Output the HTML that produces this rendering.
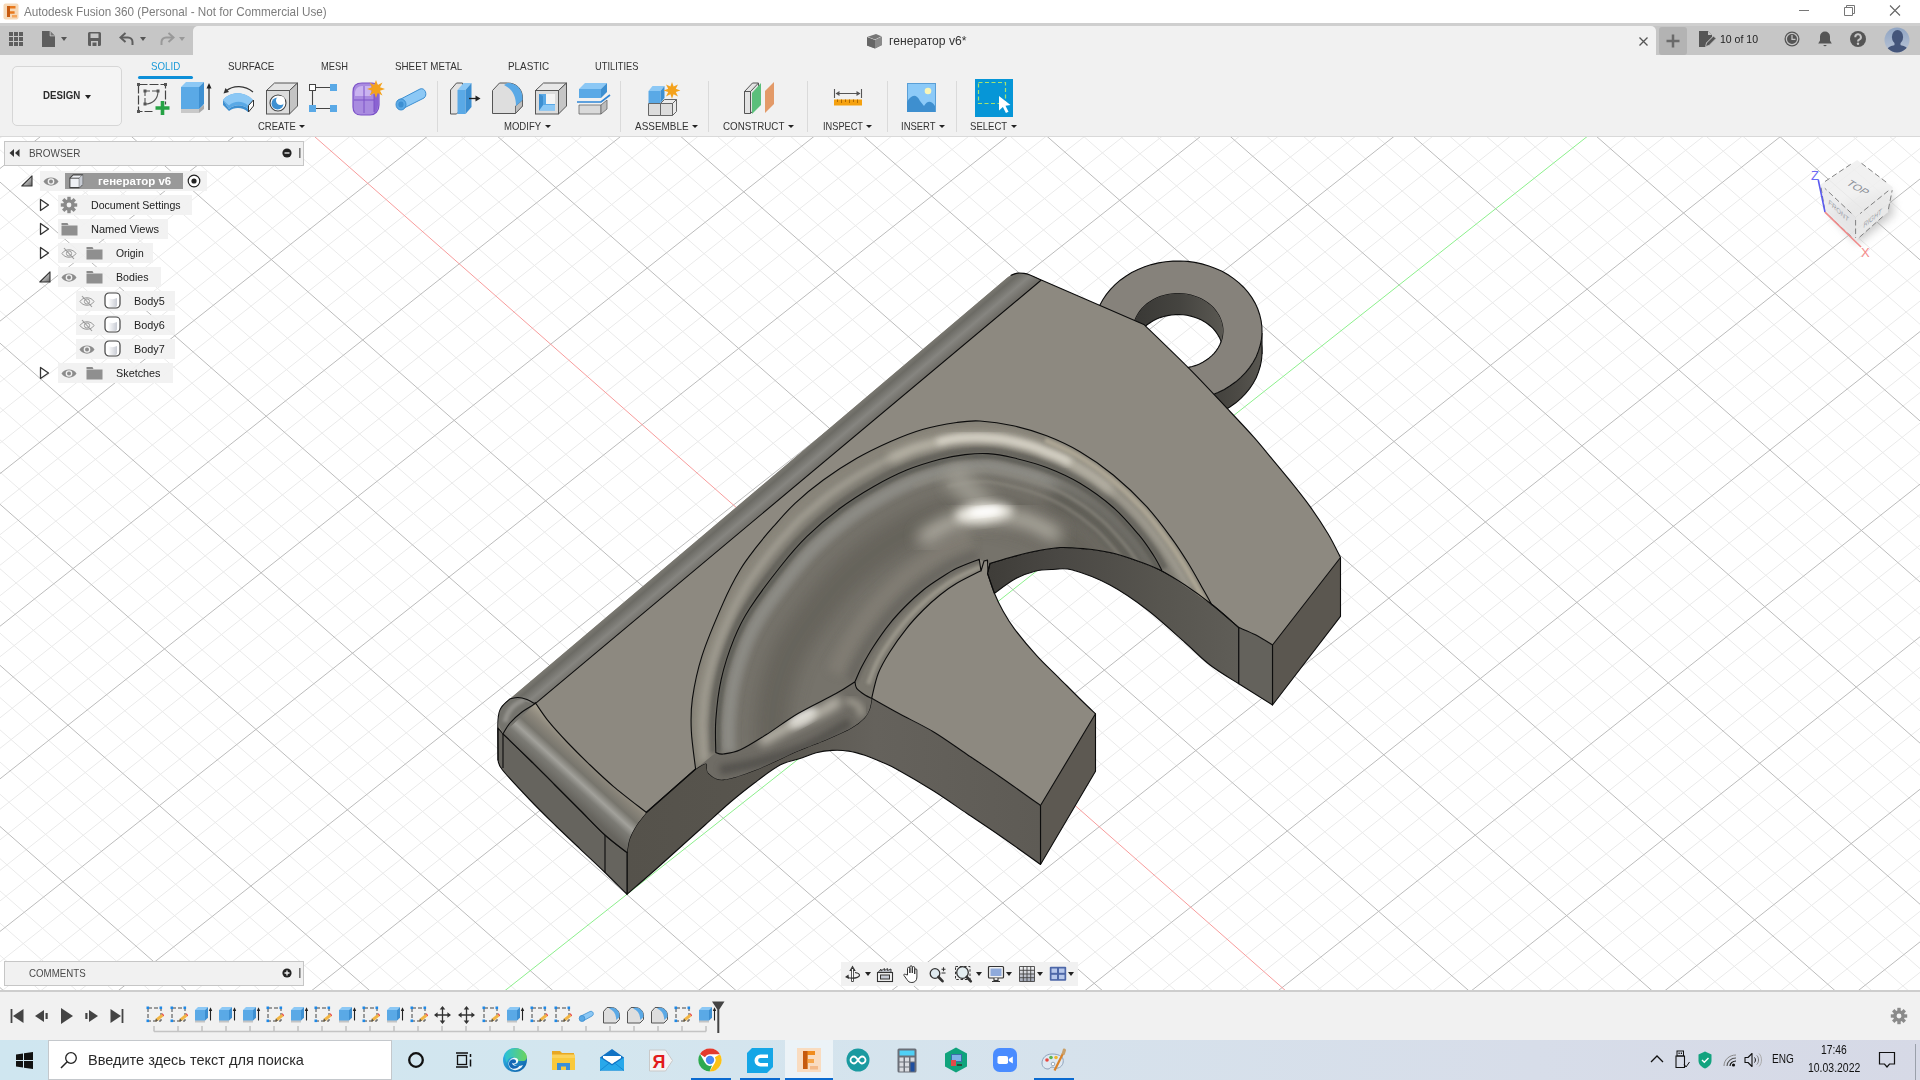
<!DOCTYPE html>
<html><head><meta charset="utf-8"><title>Autodesk Fusion 360</title>
<style>
*{box-sizing:border-box;margin:0;padding:0}
html,body{width:1920px;height:1080px;overflow:hidden;background:#fff}
body{font-family:"Liberation Sans",sans-serif;font-size:12px;color:#333}
#app{position:relative;width:1920px;height:1080px;overflow:hidden;background:#fff}
.abs{position:absolute}
svg{display:block}

</style></head>
<body>
<div id="app">
<svg id="canvas" width="1920" height="853" viewBox="0 137 1920 853" style="position:absolute;left:0;top:137px">
<rect x="0" y="137" width="1920" height="853" fill="#ffffff"/>
<path d="M-2 139.6L3.8 135M-2 200.6L81.1 135M-2 231.1L119.8 135M-2 261.6L158.5 135M-2 292.2L197.1 135M-2 953.6L41.7 992M-2 353.2L274.5 135M-2 921.4L78.3 992M-2 383.7L313.1 135M-2 889.2L114.9 992M-2 414.2L351.8 135M-2 856.9L151.5 992M-2 444.7L390.5 135M-2 792.5L224.8 992M-2 505.8L467.8 135M-2 760.3L261.4 992M-2 536.3L506.5 135M-2 728.1L298.1 992M-2 566.8L545.1 135M-2 695.8L334.7 992M-2 597.3L583.8 135M-2 631.4L408 992M-2 658.3L661.1 135M-2 599.2L444.6 992M-2 688.9L699.8 135M-2 567L481.2 992M-2 719.4L738.4 135M-2 534.7L517.9 992M-2 749.9L777.1 135M-2 470.3L591.1 992M-2 810.9L854.4 135M-2 438.1L627.8 992M-2 841.4L893.1 135M-2 405.8L664.4 992M-2 871.9L931.8 135M-2 373.6L701 992M-2 902.5L970.4 135M-2 309.2L774.3 992M-2 963.5L1047.8 135M-2 277L810.9 992M0.5 992L1086.4 135M-2 244.7L847.6 992M39.2 992L1125.1 135M-2 212.5L884.2 992M77.9 992L1163.8 135M-2 148.1L957.5 992M155.2 992L1241.1 135M19.8 135L994.1 992M193.9 992L1279.8 135M56.4 135L1030.7 992M232.5 992L1318.4 135M93 135L1067.4 992M271.2 992L1357.1 135M166.3 135L1140.6 992M348.5 992L1434.4 135M202.9 135L1177.2 992M387.2 992L1473.1 135M239.6 135L1213.9 992M425.9 992L1511.8 135M276.2 135L1250.5 992M464.5 992L1550.4 135M349.4 135L1323.8 992M541.9 992L1627.8 135M386.1 135L1360.4 992M580.5 992L1666.4 135M422.7 135L1397 992M619.2 992L1705.1 135M459.3 135L1433.7 992M657.9 992L1743.8 135M532.6 135L1506.9 992M735.2 992L1821.1 135M569.2 135L1543.6 992M773.9 992L1859.8 135M605.9 135L1580.2 992M812.5 992L1898.4 135M642.5 135L1616.8 992M851.2 992L1922 146.9M715.8 135L1690.1 992M928.5 992L1922 207.9M752.4 135L1726.7 992M967.2 992L1922 238.5M789 135L1763.4 992M1005.9 992L1922 269M825.7 135L1800 992M1044.5 992L1922 299.5M898.9 135L1873.3 992M1121.9 992L1922 360.5M935.6 135L1909.9 992M1160.5 992L1922 391M972.2 135L1922 970.4M1199.2 992L1922 421.6M1008.8 135L1922 938.2M1237.9 992L1922 452.1M1082.1 135L1922 873.8M1315.2 992L1922 513.1M1118.7 135L1922 841.5M1353.9 992L1922 543.6M1155.4 135L1922 809.3M1392.5 992L1922 574.1M1192 135L1922 777.1M1431.2 992L1922 604.6M1265.3 135L1922 712.7M1508.5 992L1922 665.7M1301.9 135L1922 680.4M1547.2 992L1922 696.2M1338.5 135L1922 648.2M1585.8 992L1922 726.7M1375.1 135L1922 616M1624.5 992L1922 757.2M1448.4 135L1922 551.6M1701.8 992L1922 818.3M1485 135L1922 519.3M1740.5 992L1922 848.8M1521.7 135L1922 487.1M1779.2 992L1922 879.3M1558.3 135L1922 454.9M1817.8 992L1922 909.8M1631.6 135L1922 390.5M1895.2 992L1922 970.8M1668.2 135L1922 358.2M1704.8 135L1922 326M1741.5 135L1922 293.8M1814.7 135L1922 229.3M1851.4 135L1922 197.1M1888 135L1922 164.9" stroke="#eaeaea" stroke-width="1" fill="none"/>
<path d="M-2 170.1L42.5 135M-2 985.8L5 992M-2 322.7L235.8 135M-2 824.7L188.2 992M-2 475.2L429.1 135M-2 663.6L371.3 992M-2 627.8L622.5 135M-2 502.5L554.5 992M-2 780.4L815.8 135M-2 341.4L737.7 992M-2 933L1009.1 135M-2 180.3L920.8 992M116.5 992L1202.4 135M129.7 135L1104 992M309.9 992L1395.8 135M496 135L1470.3 992M696.5 992L1782.4 135M679.1 135L1653.5 992M889.9 992L1922 177.4M862.3 135L1836.6 992M1083.2 992L1922 330M1045.5 135L1922 906M1276.5 992L1922 482.6M1228.6 135L1922 744.9M1469.8 992L1922 635.2M1411.8 135L1922 583.8M1663.2 992L1922 787.7M1594.9 135L1922 422.7M1856.5 992L1922 940.3M1778.1 135L1922 261.6" stroke="#bcbcbc" stroke-width="1" fill="none"/>
<path d="M312.8 135L1287.1 992" stroke="#f89c9c" stroke-width="1" fill="none"/>
<path d="M503.2 992L1589.1 135" stroke="#8cf08c" stroke-width="1" fill="none"/>
<defs>
<linearGradient id="gFil" gradientUnits="userSpaceOnUse" x1="758" y1="488.5" x2="786" y2="521.5"><stop offset="0" stop-color="#7b7972"/><stop offset=".12" stop-color="#6c6b65"/><stop offset=".32" stop-color="#868580"/><stop offset=".52" stop-color="#706e68"/><stop offset=".74" stop-color="#827e74"/><stop offset=".9" stop-color="#908b7f"/><stop offset="1" stop-color="#88847b"/></linearGradient>
<linearGradient id="gEndFil" gradientUnits="userSpaceOnUse" x1="592" y1="757" x2="562" y2="790"><stop offset="0" stop-color="#a39d8e"/><stop offset=".2" stop-color="#8b867b"/><stop offset=".42" stop-color="#77756d"/><stop offset=".6" stop-color="#a2a19b"/><stop offset=".75" stop-color="#7b7a74"/><stop offset="1" stop-color="#66645e"/></linearGradient>
<linearGradient id="gFront" gradientUnits="userSpaceOnUse" x1="627" y1="0" x2="1040" y2="0"><stop offset="0" stop-color="#55524b"/><stop offset=".35" stop-color="#58554e"/><stop offset=".6" stop-color="#65625c"/><stop offset="1" stop-color="#5e5b55"/></linearGradient>
<linearGradient id="gCut" gradientUnits="userSpaceOnUse" x1="990" y1="0" x2="1272" y2="0"><stop offset="0" stop-color="#3f3d39"/><stop offset=".25" stop-color="#4a4844"/><stop offset=".6" stop-color="#57554f"/><stop offset=".88" stop-color="#5f5d57"/><stop offset="1" stop-color="#64625c"/></linearGradient>
<linearGradient id="gRingOut" gradientUnits="userSpaceOnUse" x1="1200" y1="0" x2="1263" y2="0"><stop offset="0" stop-color="#3d3c38"/><stop offset=".6" stop-color="#4c4a45"/><stop offset="1" stop-color="#5a5852"/></linearGradient>
<linearGradient id="gRingIn" gradientUnits="userSpaceOnUse" x1="1137" y1="0" x2="1223" y2="0"><stop offset="0" stop-color="#3a3936"/><stop offset=".5" stop-color="#454440"/><stop offset="1" stop-color="#5a5852"/></linearGradient>
<linearGradient id="gTrough" gradientUnits="userSpaceOnUse" x1="760" y1="560" x2="870" y2="650"><stop offset="0" stop-color="#6b6962"/><stop offset=".25" stop-color="#7e7c75"/><stop offset=".5" stop-color="#716e66"/><stop offset=".8" stop-color="#7a766c"/><stop offset="1" stop-color="#8a867b"/></linearGradient>
<filter id="b3" x="-20%" y="-20%" width="140%" height="140%"><feGaussianBlur stdDeviation="3"/></filter>
<filter id="b5" x="-30%" y="-30%" width="160%" height="160%"><feGaussianBlur stdDeviation="5"/></filter>
<filter id="b8" x="-40%" y="-40%" width="180%" height="180%"><feGaussianBlur stdDeviation="8"/></filter>
<filter id="b2" x="-20%" y="-20%" width="140%" height="140%"><feGaussianBlur stdDeviation="1.6"/></filter>
</defs>
<mask id="mRing" maskUnits="userSpaceOnUse" x="1080" y="240" width="200" height="200"><rect x="1080" y="240" width="200" height="200" fill="#fff"/><path d="M1235.8 381.8L1240.9 377.4L1245.5 372.7L1249.6 367.6L1253.2 362.3L1256.2 356.7L1258.5 350.9L1260.3 345L1261.5 339L1262 332.9L1261.9 326.8L1261.1 320.7L1259.7 314.7L1257.7 308.8L1255.1 303.1L1251.9 297.6L1248.1 292.4L1243.8 287.5L1239 282.8L1233.7 278.6L1228.1 274.8L1222 271.3L1215.6 268.4L1208.9 265.9L1201.9 263.9L1194.8 262.4L1187.6 261.4L1180.3 261L1173 261.1L1165.7 261.7L1158.5 262.9L1151.4 264.6L1144.6 266.8L1138 269.4L1131.7 272.6L1125.8 276.2L1120.2 280.2L1115.1 284.6L1110.5 289.3L1106.4 294.4L1102.8 299.7L1099.8 305.3L1097.5 311.1L1095.7 317L1094.5 323L1094 329.1L1094.1 335.2L1094.9 341.3L1096.3 347.3L1098.3 353.2L1100.9 358.9L1104.1 364.4L1107.9 369.6L1112.2 374.5L1117 379.2L1122.3 383.4L1127.9 387.2L1134 390.7L1140.4 393.6L1147.1 396.1L1154.1 398.1L1161.2 399.6L1168.4 400.6L1175.7 401L1183 400.9L1190.3 400.3L1197.5 399.1L1204.6 397.4L1211.4 395.2L1218 392.6L1224.3 389.4L1230.2 385.8L1235.8 381.8Z" fill="#000"/></mask>
<g mask="url(#mRing)"><path d="M1235.8 402.8L1240.9 398.4L1245.5 393.7L1249.6 388.6L1253.2 383.3L1256.2 377.7L1258.5 371.9L1260.3 366L1261.5 360L1262 353.9L1261.9 347.8L1261.1 341.7L1259.7 335.7L1257.7 329.8L1255.1 324.1L1251.9 318.6L1248.1 313.4L1243.8 308.5L1239 303.8L1233.7 299.6L1228.1 295.8L1222 292.3L1215.6 289.4L1208.9 286.9L1201.9 284.9L1194.8 283.4L1187.6 282.4L1180.3 282L1173 282.1L1165.7 282.7L1158.5 283.9L1151.4 285.6L1144.6 287.8L1138 290.4L1131.7 293.6L1125.8 297.2L1120.2 301.2L1115.1 305.6L1110.5 310.3L1106.4 315.4L1102.8 320.7L1099.8 326.3L1097.5 332.1L1095.7 338L1094.5 344L1094 350.1L1094.1 356.2L1094.9 362.3L1096.3 368.3L1098.3 374.2L1100.9 379.9L1104.1 385.4L1107.9 390.6L1112.2 395.5L1117 400.2L1122.3 404.4L1127.9 408.2L1134 411.7L1140.4 414.6L1147.1 417.1L1154.1 419.1L1161.2 420.6L1168.4 421.6L1175.7 422L1183 421.9L1190.3 421.3L1197.5 420.1L1204.6 418.4L1211.4 416.2L1218 413.6L1224.3 410.4L1230.2 406.8L1235.8 402.8Z" fill="url(#gRingOut)" stroke="#0c0c0c" stroke-width="1.1"/>
<path d="M1094 329.1L1262 332.9L1262 353.9L1094 350.1Z" fill="url(#gRingOut)"/>
<path d="M1262 332.9L1262 353.9" stroke="#0c0c0c" stroke-width="1.1"/></g>
<path d="M1235.8 381.8L1240.9 377.4L1245.5 372.7L1249.6 367.6L1253.2 362.3L1256.2 356.7L1258.5 350.9L1260.3 345L1261.5 339L1262 332.9L1261.9 326.8L1261.1 320.7L1259.7 314.7L1257.7 308.8L1255.1 303.1L1251.9 297.6L1248.1 292.4L1243.8 287.5L1239 282.8L1233.7 278.6L1228.1 274.8L1222 271.3L1215.6 268.4L1208.9 265.9L1201.9 263.9L1194.8 262.4L1187.6 261.4L1180.3 261L1173 261.1L1165.7 261.7L1158.5 262.9L1151.4 264.6L1144.6 266.8L1138 269.4L1131.7 272.6L1125.8 276.2L1120.2 280.2L1115.1 284.6L1110.5 289.3L1106.4 294.4L1102.8 299.7L1099.8 305.3L1097.5 311.1L1095.7 317L1094.5 323L1094 329.1L1094.1 335.2L1094.9 341.3L1096.3 347.3L1098.3 353.2L1100.9 358.9L1104.1 364.4L1107.9 369.6L1112.2 374.5L1117 379.2L1122.3 383.4L1127.9 387.2L1134 390.7L1140.4 393.6L1147.1 396.1L1154.1 398.1L1161.2 399.6L1168.4 400.6L1175.7 401L1183 400.9L1190.3 400.3L1197.5 399.1L1204.6 397.4L1211.4 395.2L1218 392.6L1224.3 389.4L1230.2 385.8L1235.8 381.8ZM1208.9 358.2L1211.6 355.8L1214.1 353.3L1216.3 350.6L1218.2 347.7L1219.8 344.8L1221.1 341.7L1222 338.5L1222.6 335.3L1222.9 332L1222.9 328.7L1222.5 325.5L1221.7 322.3L1220.6 319.1L1219.2 316.1L1217.5 313.2L1215.5 310.4L1213.2 307.7L1210.6 305.2L1207.8 303L1204.8 300.9L1201.5 299.1L1198.1 297.5L1194.5 296.2L1190.8 295.1L1187 294.3L1183.1 293.8L1179.2 293.6L1175.3 293.6L1171.4 294L1167.6 294.6L1163.8 295.5L1160.1 296.6L1156.6 298.1L1153.2 299.8L1150.1 301.7L1147.1 303.8L1144.4 306.2L1141.9 308.7L1139.7 311.4L1137.8 314.3L1136.2 317.2L1134.9 320.3L1134 323.5L1133.4 326.7L1133.1 330L1133.1 333.3L1133.5 336.5L1134.3 339.7L1135.4 342.9L1136.8 345.9L1138.5 348.8L1140.5 351.6L1142.8 354.3L1145.4 356.8L1148.2 359L1151.2 361.1L1154.5 362.9L1157.9 364.5L1161.5 365.8L1165.2 366.9L1169 367.7L1172.9 368.2L1176.8 368.4L1180.7 368.4L1184.6 368L1188.4 367.4L1192.2 366.5L1195.9 365.4L1199.4 363.9L1202.8 362.2L1205.9 360.3L1208.9 358.2Z" fill="#86827b" fill-rule="evenodd" stroke="#0c0c0c" stroke-width="1.1"/>
<clipPath id="cpHole"><path d="M1208.9 358.2L1211.6 355.8L1214.1 353.3L1216.3 350.6L1218.2 347.7L1219.8 344.8L1221.1 341.7L1222 338.5L1222.6 335.3L1222.9 332L1222.9 328.7L1222.5 325.5L1221.7 322.3L1220.6 319.1L1219.2 316.1L1217.5 313.2L1215.5 310.4L1213.2 307.7L1210.6 305.2L1207.8 303L1204.8 300.9L1201.5 299.1L1198.1 297.5L1194.5 296.2L1190.8 295.1L1187 294.3L1183.1 293.8L1179.2 293.6L1175.3 293.6L1171.4 294L1167.6 294.6L1163.8 295.5L1160.1 296.6L1156.6 298.1L1153.2 299.8L1150.1 301.7L1147.1 303.8L1144.4 306.2L1141.9 308.7L1139.7 311.4L1137.8 314.3L1136.2 317.2L1134.9 320.3L1134 323.5L1133.4 326.7L1133.1 330L1133.1 333.3L1133.5 336.5L1134.3 339.7L1135.4 342.9L1136.8 345.9L1138.5 348.8L1140.5 351.6L1142.8 354.3L1145.4 356.8L1148.2 359L1151.2 361.1L1154.5 362.9L1157.9 364.5L1161.5 365.8L1165.2 366.9L1169 367.7L1172.9 368.2L1176.8 368.4L1180.7 368.4L1184.6 368L1188.4 367.4L1192.2 366.5L1195.9 365.4L1199.4 363.9L1202.8 362.2L1205.9 360.3L1208.9 358.2Z"/></clipPath>
<g clip-path="url(#cpHole)"><path d="M1100 250H1260V420H1100ZM1208.9 379.2L1211.6 376.8L1214.1 374.3L1216.3 371.6L1218.2 368.7L1219.8 365.8L1221.1 362.7L1222 359.5L1222.6 356.3L1222.9 353L1222.9 349.7L1222.5 346.5L1221.7 343.3L1220.6 340.1L1219.2 337.1L1217.5 334.2L1215.5 331.4L1213.2 328.7L1210.6 326.2L1207.8 324L1204.8 321.9L1201.5 320.1L1198.1 318.5L1194.5 317.2L1190.8 316.1L1187 315.3L1183.1 314.8L1179.2 314.6L1175.3 314.6L1171.4 315L1167.6 315.6L1163.8 316.5L1160.1 317.6L1156.6 319.1L1153.2 320.8L1150.1 322.7L1147.1 324.8L1144.4 327.2L1141.9 329.7L1139.7 332.4L1137.8 335.3L1136.2 338.2L1134.9 341.3L1134 344.5L1133.4 347.7L1133.1 351L1133.1 354.3L1133.5 357.5L1134.3 360.7L1135.4 363.9L1136.8 366.9L1138.5 369.8L1140.5 372.6L1142.8 375.3L1145.4 377.8L1148.2 380L1151.2 382.1L1154.5 383.9L1157.9 385.5L1161.5 386.8L1165.2 387.9L1169 388.7L1172.9 389.2L1176.8 389.4L1180.7 389.4L1184.6 389L1188.4 388.4L1192.2 387.5L1195.9 386.4L1199.4 384.9L1202.8 383.2L1205.9 381.3L1208.9 379.2Z" fill="url(#gRingIn)" fill-rule="evenodd"/><path d="M1208.9 379.2L1211.6 376.8L1214.1 374.3L1216.3 371.6L1218.2 368.7L1219.8 365.8L1221.1 362.7L1222 359.5L1222.6 356.3L1222.9 353L1222.9 349.7L1222.5 346.5L1221.7 343.3L1220.6 340.1L1219.2 337.1L1217.5 334.2L1215.5 331.4L1213.2 328.7L1210.6 326.2L1207.8 324L1204.8 321.9L1201.5 320.1L1198.1 318.5L1194.5 317.2L1190.8 316.1L1187 315.3L1183.1 314.8L1179.2 314.6L1175.3 314.6L1171.4 315L1167.6 315.6L1163.8 316.5L1160.1 317.6L1156.6 319.1L1153.2 320.8L1150.1 322.7L1147.1 324.8L1144.4 327.2L1141.9 329.7L1139.7 332.4L1137.8 335.3L1136.2 338.2L1134.9 341.3L1134 344.5L1133.4 347.7L1133.1 351L1133.1 354.3L1133.5 357.5L1134.3 360.7L1135.4 363.9L1136.8 366.9L1138.5 369.8L1140.5 372.6L1142.8 375.3L1145.4 377.8L1148.2 380L1151.2 382.1L1154.5 383.9L1157.9 385.5L1161.5 386.8L1165.2 387.9L1169 388.7L1172.9 389.2L1176.8 389.4L1180.7 389.4L1184.6 389L1188.4 388.4L1192.2 387.5L1195.9 386.4L1199.4 384.9L1202.8 383.2L1205.9 381.3L1208.9 379.2Z" fill="none" stroke="#0c0c0c" stroke-width="1.1"/></g>
<path d="M510 698.8L1006.9 278.1C1007.6 277.6 1009.2 276 1011 275.2C1012.8 274.4 1015.3 273.4 1017.5 273.1C1019.7 272.8 1021.9 273.1 1024 273.4C1026.1 273.7 1027.1 273.9 1030 275C1032.9 276.1 1039.4 279.2 1041.3 280L1143.8 324.4C1151.5 331.9 1175.6 354.9 1190 369.4C1204.4 383.9 1219.3 400.2 1230 411.5C1240.7 422.8 1246.9 429.4 1254 437.4C1261.1 445.4 1266.4 452.2 1272.6 459.6C1278.8 467 1284.8 474.2 1291 481.9C1297.2 489.6 1303.4 497.3 1309.6 505.9C1315.8 514.5 1322.8 525.1 1328 533.7C1333.2 542.3 1338.4 553.5 1340.5 557.5L1272.5 645C1269.8 643.3 1261.6 637.9 1256 635C1250.4 632.1 1241.7 628.8 1238.8 627.5C1234.4 623.8 1221.5 612.1 1212.5 605C1203.5 597.9 1193.8 590.8 1185 585C1176.2 579.2 1168.3 574.2 1160 570C1151.7 565.8 1143.3 562.9 1135 560C1126.7 557.1 1118.3 554.4 1110 552.5C1101.7 550.6 1093.3 549.6 1085 548.8C1076.7 548 1068.3 547.1 1060 547.5C1051.7 547.9 1043.3 549.6 1035 551.3C1026.7 553 1017.5 555.5 1010 557.5C1002.5 559.5 993.3 562.3 990 563.3L987.5 573.3C988.6 576.6 991.8 587 994.4 593.3C997 599.6 999.7 605.1 1003 611C1006.3 616.9 1008.8 621.5 1014.4 628.9C1020 636.3 1029.3 647.5 1036.7 655.6C1044.1 663.8 1051.5 670.4 1058.9 677.8C1066.3 685.2 1075 694 1081.1 700C1087.2 706 1093.1 711.5 1095.5 713.8L1040.5 805.5C1033.8 800.7 1012.3 785.2 1000 776.7C987.7 768.2 977.8 761.7 966.7 754.2C955.6 746.7 944.7 738.5 933.3 731.7C921.9 724.9 908.8 718.9 898.5 713.3C888.2 707.7 876.2 700.8 871.7 698.3C871.4 700.1 870.8 705.6 869.6 708.9C868.4 712.1 867.5 714.6 864.4 717.8C861.3 721 857.5 724.5 851.1 728.1C844.7 731.8 834.8 735.9 825.9 739.7C817 743.5 809.8 745.8 798 750.8C786.2 755.8 767.8 765.2 755.3 770C742.8 774.8 731.1 779.1 723.3 779.6C715.5 780.1 711.2 775.7 708.4 773C705.5 770.3 708.3 764.3 706.2 763.6C704.1 762.9 697.4 768.1 695.6 769L646.3 812.5L627 852.5C623.3 849.6 612.8 842.1 605 835C597.2 827.9 588.3 818.3 580 810C571.7 801.7 563.3 793.3 555 785C546.7 776.7 538.7 768.5 530 760C521.3 751.5 507.5 738.2 503 733.8L498 728C498.6 717.9 499.3 711 501.3 707.5C503.3 704 508.6 700.2 510 698.8Z" fill="#8d8980"/>
<path d="M1340.5 557.5L1340.5 616.3L1272.5 705L1272.5 645Z" fill="#5b5750" stroke="#0c0c0c" stroke-width="1.1" stroke-linejoin="round"/>
<path d="M990 563.3C993.3 562.3 1002.5 559.5 1010 557.5C1017.5 555.5 1026.7 553 1035 551.3C1043.3 549.6 1051.7 547.9 1060 547.5C1068.3 547.1 1076.7 548 1085 548.8C1093.3 549.6 1101.7 550.6 1110 552.5C1118.3 554.4 1126.7 557.1 1135 560C1143.3 562.9 1151.7 565.8 1160 570C1168.3 574.2 1176.2 579.2 1185 585C1193.8 590.8 1203.5 597.9 1212.5 605C1221.5 612.1 1234.4 623.8 1238.8 627.5L1238.8 683.8C1234 680.7 1219 671.9 1210 665C1201 658.1 1195.4 651.7 1185 642.5C1174.6 633.3 1160 619.6 1147.5 610C1135 600.4 1122.5 591.7 1110 585C1097.5 578.3 1082 572.6 1072.5 570C1063 567.4 1059.2 569.3 1053 569.5C1046.8 569.7 1041.3 569.7 1035 571.3C1028.7 572.9 1021.8 575.3 1015 579C1008.2 582.7 997.8 590.9 994.4 593.3L987.5 573.3Z" fill="url(#gCut)" stroke="#0c0c0c" stroke-width="1.1" stroke-linejoin="round"/>
<path d="M1238.8 627.5C1241.7 628.8 1250.4 632.1 1256 635C1261.6 637.9 1269.8 643.3 1272.5 645L1272.5 705L1238.8 683.8Z" fill="#64625c" stroke="#0c0c0c" stroke-width="1.1" stroke-linejoin="round"/>
<path d="M1095.5 713.8L1095.5 771.3L1040.5 864.5L1040.5 805.5Z" fill="#5d5952" stroke="#0c0c0c" stroke-width="1.1" stroke-linejoin="round"/>
<path d="M627 894.3L627 852.5C627.4 850.2 628 843.4 629.5 839C631 834.6 633.2 830.4 636 826C638.8 821.6 644.6 814.8 646.3 812.5L695.6 769C697.4 768.1 704.1 762.9 706.2 763.6C708.3 764.3 705.5 770.3 708.4 773C711.2 775.7 715.5 780.1 723.3 779.6C731.1 779.1 742.8 774.8 755.3 770C767.8 765.2 786.2 755.8 798 750.8C809.8 745.8 817 743.5 825.9 739.7C834.8 735.9 844.7 731.8 851.1 728.1C857.5 724.5 861.3 721 864.4 717.8C867.5 714.6 868.4 712.1 869.6 708.9C870.8 705.6 871.4 700.1 871.7 698.3C876.2 700.8 888.2 707.7 898.5 713.3C908.8 718.9 921.9 724.9 933.3 731.7C944.7 738.5 955.6 746.7 966.7 754.2C977.8 761.7 987.7 768.2 1000 776.7C1012.3 785.2 1033.8 800.7 1040.5 805.5L1040.5 864.5C1033.8 859.7 1012.3 844.3 1000 835.8C987.7 827.3 977.8 820.8 966.7 813.3C955.6 805.8 944.9 798.1 933.3 790.8C921.7 783.5 905.9 774.3 897.2 769.5C888.5 764.7 886.4 764.2 881 761.8C875.6 759.4 870.2 757.1 864.8 755.3C859.4 753.5 854 751.9 848.6 751.1C843.2 750.3 837.8 750.1 832.4 750.4C827 750.7 821.6 751.4 816.2 752.7C810.8 754.1 806 756.5 800 758.5C794 760.5 787.5 761 780 765C772.5 769 763.3 776.2 755 782.5C746.7 788.8 738.3 795.4 730 802.5C721.7 809.6 713.3 817.5 705 825C696.7 832.5 688.3 840 680 847.5C671.7 855 663.8 862.2 655 870C646.2 877.8 631.7 890.2 627 894.3Z" fill="url(#gFront)" stroke="#0c0c0c" stroke-width="1.1" stroke-linejoin="round"/>
<path d="M503 733.8C507.5 738.2 521.3 751.5 530 760C538.7 768.5 546.7 776.7 555 785C563.3 793.3 571.7 801.7 580 810C588.3 818.3 597.2 827.9 605 835C612.8 842.1 623.3 849.6 627 852.5L627 894.3C623.3 890.7 612.8 880.1 605 872.5C597.2 864.9 588.3 856.7 580 848.8C571.7 840.9 563.3 833.1 555 825C546.7 816.9 538.8 809.2 530 800C521.2 790.8 507.8 776.7 502.5 770C497.2 763.3 498.8 761.7 498 760L498 728Z" fill="#66645e" stroke="#0c0c0c" stroke-width="1.1" stroke-linejoin="round"/>
<path d="M605 835V872.5M503 733.8V768" stroke="#0c0c0c" stroke-width="1.1"/>
<path d="M510 698.8L1006.9 278.1C1007.6 277.6 1009.2 276 1011 275.2C1012.8 274.4 1015.3 273.4 1017.5 273.1C1019.7 272.8 1021.9 273.1 1024 273.4C1026.1 273.7 1027.1 273.9 1030 275C1032.9 276.1 1039.4 279.2 1041.3 280L535 703.8Z" fill="url(#gFil)"/>
<path d="M535.2 702.5C537.5 705.7 543.4 715 548.8 721.7C554.2 728.4 560.9 735.6 567.5 742.5C574.1 749.4 580.7 756 588.3 763.3C595.9 770.6 603.6 778.1 613.3 786.3C623 794.5 640.8 808.1 646.3 812.5C644.6 814.8 638.8 821.6 636 826C633.2 830.4 631 834.6 629.5 839C628 843.4 627.4 850.2 627 852.5C623.3 849.6 612.8 842.1 605 835C597.2 827.9 588.3 818.3 580 810C571.7 801.7 563.3 793.3 555 785C546.7 776.7 538.7 768.5 530 760C521.3 751.5 507.5 738.2 503 733.8Z" fill="url(#gEndFil)"/>
<path d="M503 733.8C502.2 731.8 498.8 726.4 498.5 722C498.2 717.6 499.4 711.4 501.3 707.5C503.2 703.6 508.6 700.2 510 698.8L535 703.8Z" fill="#74736d"/>
<path d="M505 722Q508 706 524 700" stroke="#9b9a94" stroke-width="5" fill="none" filter="url(#b2)" opacity=".8"/>
<clipPath id="cpLip"><path d="M695.6 769C694.9 762.6 691.8 742.3 691.3 730.6C690.8 718.9 690.6 711.1 692.4 698.6C694.2 686.1 696.9 671.9 702 655.9C707.1 639.9 717 616.9 723.3 602.6C729.6 588.3 734.4 579.3 740 570C745.6 560.7 751.2 553.9 756.7 546.7C762.2 539.5 766.9 533.9 773.3 526.7C779.7 519.5 786.7 511.1 795 503.3C803.3 495.5 813 487.5 823.3 480C833.6 472.5 845.6 464.7 856.7 458.3C867.8 451.9 878.9 446.6 890 441.7C901.1 436.8 912.2 432.4 923.3 429.2C934.4 426 947.2 423.9 956.7 422.5C966.2 421.1 970.6 420.4 980 421C989.4 421.6 1002.2 423.3 1013.3 425.8C1024.4 428.3 1035.6 431.5 1046.7 435.8C1057.8 440.1 1068.9 445.2 1080 451.7C1091.1 458.2 1102.2 465.8 1113.3 475C1124.4 484.2 1137 496.1 1146.7 506.7C1156.4 517.2 1164.8 528.9 1171.7 538.3C1178.6 547.7 1183.3 555.2 1188.3 563.3C1193.3 571.4 1197.8 579.8 1201.7 586.7C1205.7 593.7 1210.3 602 1212 605L1161.7 570C1160.3 567.5 1157.2 561 1153.3 555C1149.4 549 1145 542.1 1138.3 534.2C1131.6 526.3 1123 516 1113.3 507.5C1103.6 499 1091.1 490 1080 483.3C1068.9 476.6 1057.8 471.8 1046.7 467.5C1035.6 463.2 1023.1 460.1 1013.3 457.8C1003.5 455.5 996 454.1 988 453.6C980 453.1 973 453.7 965 454.6C957 455.5 949.7 456.6 940 459.2C930.3 461.8 917.8 465.4 906.7 470C895.6 474.6 884.4 480.3 873.3 486.7C862.2 493.1 851.1 500 840 508.3C828.9 516.6 816.4 527.2 806.7 536.7C797 546.2 791.2 553.1 781.7 565C772.2 576.9 758 595.7 750 608C742 620.3 738.8 627 734 638.9C729.2 650.8 724.2 665.9 721.2 679.4C718.2 692.9 716.7 707.7 715.8 719.9C714.9 732.1 715.8 747.1 715.8 752.5Z"/></clipPath>
<path d="M695.6 769C694.9 762.6 691.8 742.3 691.3 730.6C690.8 718.9 690.6 711.1 692.4 698.6C694.2 686.1 696.9 671.9 702 655.9C707.1 639.9 717 616.9 723.3 602.6C729.6 588.3 734.4 579.3 740 570C745.6 560.7 751.2 553.9 756.7 546.7C762.2 539.5 766.9 533.9 773.3 526.7C779.7 519.5 786.7 511.1 795 503.3C803.3 495.5 813 487.5 823.3 480C833.6 472.5 845.6 464.7 856.7 458.3C867.8 451.9 878.9 446.6 890 441.7C901.1 436.8 912.2 432.4 923.3 429.2C934.4 426 947.2 423.9 956.7 422.5C966.2 421.1 970.6 420.4 980 421C989.4 421.6 1002.2 423.3 1013.3 425.8C1024.4 428.3 1035.6 431.5 1046.7 435.8C1057.8 440.1 1068.9 445.2 1080 451.7C1091.1 458.2 1102.2 465.8 1113.3 475C1124.4 484.2 1137 496.1 1146.7 506.7C1156.4 517.2 1164.8 528.9 1171.7 538.3C1178.6 547.7 1183.3 555.2 1188.3 563.3C1193.3 571.4 1197.8 579.8 1201.7 586.7C1205.7 593.7 1210.3 602 1212 605L1161.7 570C1160.3 567.5 1157.2 561 1153.3 555C1149.4 549 1145 542.1 1138.3 534.2C1131.6 526.3 1123 516 1113.3 507.5C1103.6 499 1091.1 490 1080 483.3C1068.9 476.6 1057.8 471.8 1046.7 467.5C1035.6 463.2 1023.1 460.1 1013.3 457.8C1003.5 455.5 996 454.1 988 453.6C980 453.1 973 453.7 965 454.6C957 455.5 949.7 456.6 940 459.2C930.3 461.8 917.8 465.4 906.7 470C895.6 474.6 884.4 480.3 873.3 486.7C862.2 493.1 851.1 500 840 508.3C828.9 516.6 816.4 527.2 806.7 536.7C797 546.2 791.2 553.1 781.7 565C772.2 576.9 758 595.7 750 608C742 620.3 738.8 627 734 638.9C729.2 650.8 724.2 665.9 721.2 679.4C718.2 692.9 716.7 707.7 715.8 719.9C714.9 732.1 715.8 747.1 715.8 752.5Z" fill="#7d7a71"/>
<clipPath id="cpTr"><path d="M715.8 752.5C715.8 747.1 714.9 732.1 715.8 719.9C716.7 707.7 718.2 692.9 721.2 679.4C724.2 665.9 729.2 650.8 734 638.9C738.8 627 742 620.3 750 608C758 595.7 772.2 576.9 781.7 565C791.2 553.1 797 546.2 806.7 536.7C816.4 527.2 828.9 516.6 840 508.3C851.1 500 862.2 493.1 873.3 486.7C884.4 480.3 895.6 474.6 906.7 470C917.8 465.4 930.3 461.8 940 459.2C949.7 456.6 957 455.5 965 454.6C973 453.7 980 453.1 988 453.6C996 454.1 1003.5 455.5 1013.3 457.8C1023.1 460.1 1035.6 463.2 1046.7 467.5C1057.8 471.8 1068.9 476.6 1080 483.3C1091.1 490 1103.6 499 1113.3 507.5C1123 516 1131.6 526.3 1138.3 534.2C1145 542.1 1149.4 549 1153.3 555C1157.2 561 1160.3 567.5 1161.7 570L1160 570L1135 560L1110 552.5L1085 548.8L1060 547.5L1035 551.3L1010 557.5L990 563.3L979.2 559.2C975.5 560.7 963.2 565.1 956.7 568.3C950.2 571.5 945.6 574.7 940 578.3C934.4 581.9 928.8 585.5 923.3 590C917.8 594.5 912.2 599.5 906.7 605C901.2 610.5 895.6 616.3 890 623.3C884.4 630.2 878 639.5 873.3 646.7C868.6 653.9 864.8 660.9 861.7 666.7C858.7 672.5 859.3 677.2 855 681.7C850.7 686.2 845.5 688.2 836 693.5C826.5 698.8 809.7 706.6 798 713.5C786.3 720.4 775.6 728.8 766 734.8C756.4 740.8 747.5 746.6 740.4 749.8C733.3 753 727.4 753.5 723.3 754C719.2 754.5 717 752.8 715.8 752.5Z"/></clipPath>
<path d="M715.8 752.5C715.8 747.1 714.9 732.1 715.8 719.9C716.7 707.7 718.2 692.9 721.2 679.4C724.2 665.9 729.2 650.8 734 638.9C738.8 627 742 620.3 750 608C758 595.7 772.2 576.9 781.7 565C791.2 553.1 797 546.2 806.7 536.7C816.4 527.2 828.9 516.6 840 508.3C851.1 500 862.2 493.1 873.3 486.7C884.4 480.3 895.6 474.6 906.7 470C917.8 465.4 930.3 461.8 940 459.2C949.7 456.6 957 455.5 965 454.6C973 453.7 980 453.1 988 453.6C996 454.1 1003.5 455.5 1013.3 457.8C1023.1 460.1 1035.6 463.2 1046.7 467.5C1057.8 471.8 1068.9 476.6 1080 483.3C1091.1 490 1103.6 499 1113.3 507.5C1123 516 1131.6 526.3 1138.3 534.2C1145 542.1 1149.4 549 1153.3 555C1157.2 561 1160.3 567.5 1161.7 570L1160 570L1135 560L1110 552.5L1085 548.8L1060 547.5L1035 551.3L1010 557.5L990 563.3L979.2 559.2C975.5 560.7 963.2 565.1 956.7 568.3C950.2 571.5 945.6 574.7 940 578.3C934.4 581.9 928.8 585.5 923.3 590C917.8 594.5 912.2 599.5 906.7 605C901.2 610.5 895.6 616.3 890 623.3C884.4 630.2 878 639.5 873.3 646.7C868.6 653.9 864.8 660.9 861.7 666.7C858.7 672.5 859.3 677.2 855 681.7C850.7 686.2 845.5 688.2 836 693.5C826.5 698.8 809.7 706.6 798 713.5C786.3 720.4 775.6 728.8 766 734.8C756.4 740.8 747.5 746.6 740.4 749.8C733.3 753 727.4 753.5 723.3 754C719.2 754.5 717 752.8 715.8 752.5Z" fill="#76736b"/>
<clipPath id="cpInl"><path d="M979.2 559.2C975.5 560.7 963.2 565.1 956.7 568.3C950.2 571.5 945.6 574.7 940 578.3C934.4 581.9 928.8 585.5 923.3 590C917.8 594.5 912.2 599.5 906.7 605C901.2 610.5 895.6 616.3 890 623.3C884.4 630.2 878 639.5 873.3 646.7C868.6 653.9 864.8 660.9 861.7 666.7C858.7 672.5 856.1 679.2 855 681.7C855.3 682.8 855 686.1 856.7 688.3C858.4 690.5 862.5 693.3 865 695C867.5 696.7 870.6 697.8 871.7 698.3C872.8 694.1 875.2 681.1 878.3 673.3C881.3 665.5 885.3 659.2 890 651.7C894.7 644.2 901.2 635.2 906.7 628.3C912.2 621.3 917.8 615.5 923.3 610C928.8 604.5 934.4 599.5 940 595C945.6 590.5 949.9 587.3 956.7 583.3C963.5 579.3 976.8 572.9 980.8 570.8Z"/></clipPath>
<path d="M979.2 559.2C975.5 560.7 963.2 565.1 956.7 568.3C950.2 571.5 945.6 574.7 940 578.3C934.4 581.9 928.8 585.5 923.3 590C917.8 594.5 912.2 599.5 906.7 605C901.2 610.5 895.6 616.3 890 623.3C884.4 630.2 878 639.5 873.3 646.7C868.6 653.9 864.8 660.9 861.7 666.7C858.7 672.5 856.1 679.2 855 681.7C855.3 682.8 855 686.1 856.7 688.3C858.4 690.5 862.5 693.3 865 695C867.5 696.7 870.6 697.8 871.7 698.3C872.8 694.1 875.2 681.1 878.3 673.3C881.3 665.5 885.3 659.2 890 651.7C894.7 644.2 901.2 635.2 906.7 628.3C912.2 621.3 917.8 615.5 923.3 610C928.8 604.5 934.4 599.5 940 595C945.6 590.5 949.9 587.3 956.7 583.3C963.5 579.3 976.8 572.9 980.8 570.8Z" fill="#7b786f"/>
<g clip-path="url(#cpInl)"><path d="M981.5 566.5C977.6 568.3 964.9 573.7 958.2 577.3C951.5 580.9 947.1 584.1 941.5 588.1C935.9 592.2 930.3 596.5 924.8 601.5C919.2 606.5 913.8 611.9 908.2 618.1C902.7 624.4 896.6 631.8 891.5 639C886.4 646.2 881.2 654 877.3 661.5C873.4 669 869.7 680.2 868.2 684" stroke="#9d998d" stroke-width="4.5" fill="none" filter="url(#b2)" opacity=".9"/><path d="M980.2 560.2C976.5 561.7 964.2 566.1 957.7 569.3C951.2 572.5 946.6 575.7 941 579.3C935.4 582.9 929.8 586.5 924.3 591C918.8 595.5 913.2 600.5 907.7 606C902.2 611.5 896.6 617.3 891 624.3C885.4 631.2 879 640.5 874.3 647.7C869.6 654.9 865.8 661.9 862.7 667.7C859.7 673.5 857.1 680.2 856 682.7" stroke="#63615b" stroke-width="3" fill="none" filter="url(#b2)" opacity=".7"/></g>
<clipPath id="cpBul"><path d="M695.6 769C697.4 768.1 704.1 762.9 706.2 763.6C708.3 764.3 705.5 770.3 708.4 773C711.2 775.7 715.5 780.1 723.3 779.6C731.1 779.1 742.8 774.8 755.3 770C767.8 765.2 786.2 755.8 798 750.8C809.8 745.8 817 743.5 825.9 739.7C834.8 735.9 844.7 731.8 851.1 728.1C857.5 724.5 861.3 721 864.4 717.8C867.5 714.6 868.4 712.1 869.6 708.9C870.8 705.6 871.4 700.1 871.7 698.3C870.6 697.8 867.5 696.7 865 695C862.5 693.3 858.4 690.5 856.7 688.3C855 686.1 855.3 682.8 855 681.7C851.8 683.7 845.5 688.2 836 693.5C826.5 698.8 809.7 706.6 798 713.5C786.3 720.4 775.6 728.8 766 734.8C756.4 740.8 747.5 746.6 740.4 749.8C733.3 753 727.4 753.5 723.3 754C719.2 754.5 717 752.8 715.8 752.5L695.6 769Z"/></clipPath>
<path d="M695.6 769C697.4 768.1 704.1 762.9 706.2 763.6C708.3 764.3 705.5 770.3 708.4 773C711.2 775.7 715.5 780.1 723.3 779.6C731.1 779.1 742.8 774.8 755.3 770C767.8 765.2 786.2 755.8 798 750.8C809.8 745.8 817 743.5 825.9 739.7C834.8 735.9 844.7 731.8 851.1 728.1C857.5 724.5 861.3 721 864.4 717.8C867.5 714.6 868.4 712.1 869.6 708.9C870.8 705.6 871.4 700.1 871.7 698.3C870.6 697.8 867.5 696.7 865 695C862.5 693.3 858.4 690.5 856.7 688.3C855 686.1 855.3 682.8 855 681.7C851.8 683.7 845.5 688.2 836 693.5C826.5 698.8 809.7 706.6 798 713.5C786.3 720.4 775.6 728.8 766 734.8C756.4 740.8 747.5 746.6 740.4 749.8C733.3 753 727.4 753.5 723.3 754C719.2 754.5 717 752.8 715.8 752.5L695.6 769Z" fill="#6f6c65"/>
<g clip-path="url(#cpLip)">
<path d="M712.3 752.5C712.3 747 711.4 732 712.3 719.6C713.2 707.3 714.7 692.3 717.8 678.6C720.9 665 725.9 649.7 730.8 637.6C735.6 625.5 739 618.6 747.1 606.1C755.1 593.6 769.4 574.8 779 562.8C788.5 550.8 794.4 543.7 804.3 534.2C814.1 524.6 826.7 513.9 837.9 505.5C849.1 497.1 860.3 490.1 871.6 483.7C882.8 477.2 894.1 471.4 905.4 466.8C916.6 462.1 929.2 458.4 939.1 455.8C949 453.2 956.4 452.1 964.6 451.1C972.8 450.2 980 449.6 988.2 450.1C996.5 450.7 1004.2 452 1014.1 454.4C1024.1 456.7 1036.7 459.9 1047.9 464.2C1059.2 468.5 1070.5 473.5 1081.8 480.3C1093.1 487.1 1105.7 496.3 1115.6 504.9C1125.5 513.5 1134.2 523.9 1141 531.9C1147.7 540 1152.3 547 1156.2 553.1C1160.2 559.1 1163.3 565.8 1164.8 568.3" stroke="#615f59" stroke-width="7" fill="none" filter="url(#b2)" opacity=".8"/>
<path d="M700.1 768.5C699.4 762.1 696.3 741.9 695.8 730.4C695.3 718.9 695.1 711.4 696.9 699.2C698.6 687.1 701.2 673.1 706.3 657.3C711.4 641.5 721.2 618.6 727.4 604.4C733.7 590.3 738.4 581.5 743.9 572.3C749.3 563.1 754.8 556.5 760.3 549.4C765.7 542.3 770.4 536.8 776.7 529.7C783 522.5 789.9 514.3 798.1 506.6C806.3 498.9 815.8 491 826 483.6C836.1 476.2 848 468.5 858.9 462.2C869.9 455.9 880.9 450.6 891.8 445.8C902.7 441 913.6 436.7 924.5 433.5C935.5 430.4 948.1 428.3 957.3 427C966.5 425.6 970.6 425 979.7 425.5C988.9 426 1001.4 427.8 1012.3 430.2C1023.2 432.6 1034.2 435.8 1045.1 440C1056 444.2 1066.8 449.2 1077.7 455.6C1088.6 462 1099.5 469.4 1110.4 478.5C1121.4 487.5 1133.8 499.3 1143.4 509.8C1153 520.2 1161.2 531.6 1168.1 541C1174.9 550.3 1179.5 557.7 1184.5 565.7C1189.4 573.7 1193.9 582 1197.8 588.9C1201.7 595.8 1206.4 604.2 1208.1 607.2" stroke="#928d81" stroke-width="7" fill="none" filter="url(#b3)" opacity=".8"/>
<path d="M704.7 761.6C704.5 759.5 704.1 753.2 703.8 749C703.6 744.8 703.2 740.6 703 736.4C702.8 732.2 702.4 728 702.4 723.8C702.5 719.6 703.1 715.4 703.4 711.2C703.7 707 703.8 702.8 704.3 698.6C704.8 694.5 705.6 690.3 706.4 686.2C707.3 682.1 708.2 678 709.2 673.9C710.2 669.8 711.2 665.7 712.4 661.7C713.6 657.6 715 653.7 716.3 649.7C717.7 645.7 719.1 641.8 720.7 637.8C722.2 633.9 723.9 630.1 725.6 626.2C727.2 622.4 728.9 618.5 730.7 614.7C732.5 610.9 734.2 607 736.2 603.3C738.1 599.6 740.3 596 742.4 592.3C744.5 588.7 746.5 585 748.8 581.5C751.1 578 753.7 574.6 756.1 571.2C758.6 567.8 761 564.3 763.5 561C766 557.6 768.6 554.3 771.3 551C773.9 547.7 776.6 544.5 779.4 541.3C782.2 538.2 785 535.1 787.9 532C790.7 528.8 793.4 525.6 796.4 522.6C799.3 519.6 802.4 516.7 805.5 513.9C808.7 511.2 812 508.5 815.2 505.8C818.4 503.2 821.6 500.3 824.9 497.8C828.2 495.2 831.6 492.7 835.1 490.3C838.5 487.8 842 485.5 845.5 483.2C849 480.9 852.5 478.5 856.1 476.3C859.7 474.1 863.5 472.2 867.1 470.2C870.8 468.1 874.4 466 878.2 464.1C881.9 462.2 885.7 460.4 889.6 458.7C893.4 456.9 897.3 455.4 901.2 453.7C905.1 452.1 908.9 450.2 912.8 448.8C916.8 447.4 920.8 446.4 924.9 445.3C929 444.2 933.1 443.2 937.1 442.2C941.2 441.3 945.3 440.2 949.4 439.4C953.5 438.7 957.7 438.2 961.9 437.8C966.1 437.4 970.2 437.3 974.4 437.3C978.6 437.2 982.7 437.5 986.9 437.7C991.1 437.9 995.3 438.1 999.4 438.7C1003.6 439.2 1007.6 440.1 1011.7 441C1015.8 441.9 1019.9 442.9 1024 444C1028 445.1 1032 446.3 1036 447.7C1039.9 449.1 1043.8 450.8 1047.7 452.4C1051.6 453.9 1055.5 455.3 1059.4 457C1063.2 458.7 1066.8 460.6 1070.5 462.7C1074.1 464.7 1077.7 467 1081.3 469.2C1084.9 471.3 1088.6 473.4 1092 475.7C1095.5 478 1098.9 480.5 1102.2 483C1105.5 485.6 1108.7 488.3 1111.9 491C1115.1 493.7 1118.4 496.3 1121.5 499.1C1124.6 502 1127.6 504.8 1130.6 507.8C1133.6 510.7 1136.5 513.6 1139.3 516.7C1142.2 519.8 1144.8 523.1 1147.5 526.4C1150.2 529.6 1152.7 532.9 1155.3 536.2C1157.9 539.5 1160.5 542.8 1163 546.2C1165.4 549.7 1167.7 553.2 1170 556.7C1172.3 560.2 1174.5 563.8 1176.7 567.4C1178.9 571 1181.1 574.6 1183.2 578.2C1185.3 581.9 1188.3 587.4 1189.4 589.3" stroke="#a6a296" stroke-width="8" fill="none" filter="url(#b3)" opacity=".9"/>
<path d="M889.6 458.7C891.5 457.8 897.3 455.4 901.2 453.7C905.1 452.1 908.9 450.2 912.8 448.8C916.8 447.4 920.8 446.4 924.9 445.3C929 444.2 933.1 443.2 937.1 442.2C941.2 441.3 945.3 440.2 949.4 439.4C953.5 438.7 957.7 438.2 961.9 437.8C966.1 437.4 970.2 437.3 974.4 437.3C978.6 437.2 982.7 437.5 986.9 437.7C991.1 437.9 995.3 438.1 999.4 438.7C1003.6 439.2 1007.6 440.1 1011.7 441C1015.8 441.9 1019.9 442.9 1024 444C1028 445.1 1032 446.3 1036 447.7C1039.9 449.1 1043.8 450.8 1047.7 452.4C1051.6 453.9 1055.5 455.3 1059.4 457C1063.2 458.7 1066.8 460.6 1070.5 462.7C1074.1 464.7 1077.7 467 1081.3 469.2C1084.9 471.3 1088.6 473.4 1092 475.7C1095.5 478 1098.9 480.5 1102.2 483C1105.5 485.6 1110.3 489.6 1111.9 491" stroke="#c0bbad" stroke-width="8" fill="none" filter="url(#b5)" opacity=".9"/>
<path d="M937.1 442.2C939.2 441.8 945.3 440.2 949.4 439.4C953.5 438.7 957.7 438.2 961.9 437.8C966.1 437.4 970.2 437.3 974.4 437.3C978.6 437.2 982.7 437.5 986.9 437.7C991.1 437.9 995.3 438.1 999.4 438.7C1003.6 439.2 1007.6 440.1 1011.7 441C1015.8 441.9 1019.9 442.9 1024 444C1028 445.1 1032 446.3 1036 447.7C1039.9 449.1 1043.8 450.8 1047.7 452.4C1051.6 453.9 1055.5 455.3 1059.4 457C1063.2 458.7 1068.6 461.7 1070.5 462.7" stroke="#e2ded2" stroke-width="6" fill="none" filter="url(#b3)" opacity=".95"/>
<path d="M1045.1 440C1050.5 442.6 1066.8 449.2 1077.7 455.6C1088.6 462 1099.5 469.4 1110.4 478.5C1121.4 487.5 1133.8 499.3 1143.4 509.8C1153 520.2 1161.2 531.6 1168.1 541C1174.9 550.3 1179.5 557.7 1184.5 565.7C1189.4 573.7 1193.9 582 1197.8 588.9C1201.7 595.8 1206.4 604.2 1208.1 607.2" stroke="#b0a997" stroke-width="5" fill="none" filter="url(#b2)" opacity=".9"/>
</g>
<g clip-path="url(#cpTr)">
<path d="M771.8 752.5C771.8 747.8 771 734.2 771.6 724C772.3 713.9 773.5 702.4 775.8 691.7C778.2 681 782.4 668.7 785.9 659.8C789.5 651 790.5 648.4 797.1 638.4C803.6 628.4 817.4 610.1 825.5 599.9C833.6 589.6 837.7 584.6 845.7 576.8C853.8 569 864.4 560 873.6 553.1C882.9 546.2 892.1 540.5 901.2 535.3C910.3 530 919.2 525.4 928 521.8C936.9 518.1 947.1 515.3 954.3 513.3C961.5 511.4 966.5 510.9 971.5 510.2C976.5 509.6 979.5 509.1 984.3 509.5C989.1 509.8 993.3 510.6 1000.4 512.3C1007.5 514 1018.2 516.6 1026.7 519.8C1035.2 523 1042.9 526.3 1051.2 531.3C1059.5 536.3 1069.1 543.2 1076.5 549.7C1083.9 556.2 1092.3 566.8 1095.5 570.3" stroke="#66635b" stroke-width="34" fill="none" filter="url(#b8)" opacity=".95"/>
<path d="M728.8 752.5C728.8 747.2 727.9 732.6 728.8 720.9C729.6 709.1 731 695.1 733.9 682.2C736.8 669.4 741.5 655 746.1 643.8C750.6 632.6 753.3 626.8 760.9 615.1C768.6 603.3 782.7 584.6 791.9 573.1C801 561.6 806.4 555.1 815.8 546C825.1 537 837.1 526.7 847.8 518.7C858.5 510.7 869.1 504.1 879.8 498C890.4 491.9 901.1 486.4 911.7 482C922.2 477.7 934.2 474.2 943.3 471.8C952.5 469.4 959.2 468.4 966.5 467.5C973.8 466.6 979.8 466.1 987.1 466.6C994.4 467.1 1001.2 468.3 1010.3 470.5C1019.5 472.6 1031.6 475.6 1042.1 479.6C1052.6 483.6 1062.9 488.2 1073.3 494.4C1083.8 500.7 1095.6 509.3 1104.8 517.3C1113.9 525.3 1122.1 535.1 1128.4 542.6C1134.6 550 1138.8 556.5 1142.4 562.1C1146.1 567.7 1149 574 1150.4 576.4" stroke="#8d8c86" stroke-width="13" fill="none" filter="url(#b3)" opacity=".95"/>
<path d="M718.3 752.5C718.3 747.1 717.4 732.2 718.3 720.1C719.2 708 720.6 693.3 723.6 679.9C726.6 666.6 731.6 651.6 736.3 639.8C741.1 628.1 744.2 621.6 752.1 609.4C760 597.1 774.3 578.4 783.7 566.6C793 554.7 798.8 547.9 808.4 538.5C818.1 529.1 830.5 518.6 841.5 510.3C852.5 502 863.5 495.2 874.5 488.9C885.6 482.5 896.6 476.9 907.7 472.3C918.7 467.8 931 464.2 940.6 461.6C950.2 459.1 957.4 458 965.3 457.1C973.2 456.2 979.9 455.6 987.8 456.1C995.7 456.6 1003.1 457.9 1012.7 460.2C1022.4 462.5 1034.8 465.6 1045.8 469.8C1056.8 474 1067.7 478.9 1078.7 485.4C1089.7 492 1102 501 1111.7 509.4C1121.3 517.8 1129.8 528 1136.4 535.8C1143 543.6 1147.4 550.5 1151.2 556.4C1155.1 562.3 1158.1 568.7 1159.5 571.2" stroke="#5f5e58" stroke-width="5" fill="none" filter="url(#b2)" opacity=".9"/>
<path d="M971 538.8C967 540.4 954.2 545 947.1 548.5C939.9 552 934.3 555.8 928 559.9C921.8 563.9 915.7 567.9 909.5 572.8C903.4 577.8 897.3 583.3 891.1 589.4C885 595.6 878.9 602 872.8 609.5C866.8 617.1 860 626.9 854.9 634.7C849.8 642.5 845.5 650.2 842.2 656.5C838.9 662.8 836.1 670 834.9 672.7" stroke="#827e75" stroke-width="16" fill="none" filter="url(#b5)" opacity=".85"/>
<path d="M977.3 554.6C973.5 556.1 961.2 560.5 954.5 563.8C947.8 567.1 943 570.4 937.3 574.1C931.6 577.8 925.9 581.5 920.2 586.1C914.5 590.7 908.8 595.8 903.2 601.5C897.5 607.1 891.8 613.1 886.1 620.2C880.4 627.3 873.9 636.6 869.1 644C864.3 651.3 860.4 658.4 857.3 664.4C854.2 670.3 851.6 677.1 850.4 679.7" stroke="#67655f" stroke-width="9" fill="none" filter="url(#b3)" opacity=".8"/>
<path d="M1050 494C1056.7 497.3 1077.5 505.2 1090 514C1102.5 522.8 1115 535.7 1125 547C1135 558.3 1145.8 576.2 1150 582" stroke="#5c5a53" stroke-width="26" fill="none" filter="url(#b8)" opacity=".85"/>
<path d="M913.2 485.7C918.4 484 935.4 478 944.3 475.6C953.3 473.3 959.9 472.3 967 471.5C974.1 470.6 979.8 470.1 986.9 470.6C993.9 471 1000.4 472.2 1009.4 474.3C1018.3 476.5 1030.3 479.5 1040.6 483.4C1050.9 487.3 1061 491.7 1071.2 497.9C1081.5 504 1093.1 512.4 1102.1 520.3C1111.1 528.2 1119.1 537.8 1125.3 545.2C1131.5 552.5 1135.5 558.8 1139.1 564.3C1142.7 569.8 1145.6 576 1146.9 578.3" stroke="#8a877e" stroke-width="3" fill="none" filter="url(#b2)" opacity=".8"/>
<path d="M947.2 486.3C950.7 485.6 961.7 483.2 968.2 482.4C974.7 481.6 979.7 481.1 986.1 481.5C992.6 482 998.4 483 1006.8 485C1015.3 487.1 1026.9 489.9 1036.7 493.7C1046.5 497.4 1055.9 501.5 1065.6 507.3C1075.3 513.1 1086.3 521.1 1094.9 528.6C1103.4 536.1 1111.1 545.3 1116.9 552.2C1122.7 559.2 1126.5 565.1 1129.9 570.3C1133.3 575.6 1136 581.5 1137.3 583.7" stroke="#8a877e" stroke-width="3" fill="none" filter="url(#b2)" opacity=".7"/>
<path d="M950 472C953.3 475.3 963.3 485.3 970 492C976.7 498.7 986.7 508.7 990 512" stroke="#a3a096" stroke-width="24" fill="none" filter="url(#b8)" opacity=".85"/>
<path d="M920 540C925 537.2 939.2 527.1 950 523C960.8 518.9 972.5 516 985 515.5C997.5 515 1012.5 516.4 1025 520C1037.5 523.6 1054.2 534.2 1060 537" stroke="#cfcbc0" stroke-width="13" fill="none" filter="url(#b8)" opacity=".85"/>
<ellipse cx="984" cy="513" rx="29" ry="9.500" fill="#f4f2ea" filter="url(#b5)" opacity=".95" transform="rotate(-6 984 513)"/>
<ellipse cx="985" cy="511.500" rx="16" ry="4.500" fill="#ffffff" filter="url(#b3)" opacity=".95" transform="rotate(-6 985 511.500)"/>
</g>
<g clip-path="url(#cpBul)">
<path d="M720 770C726.7 768.7 745 766.2 760 762C775 757.8 795 751.7 810 745C825 738.3 843.3 725.8 850 722" stroke="#504e49" stroke-width="10" fill="none" filter="url(#b3)" opacity=".8"/>
<ellipse cx="803" cy="718" rx="16" ry="6" fill="#ffffff" filter="url(#b3)" opacity=".95" transform="rotate(-28 803 718)"/>
<path d="M760 742C765 739.3 780 731 790 726C800 721 811.7 716.3 820 712C828.3 707.7 836.7 702 840 700" stroke="#cbc7bb" stroke-width="9" fill="none" filter="url(#b5)" opacity=".9"/>
<path d="M846 700C848 700.8 855.3 702.3 858 705C860.7 707.7 861.3 714.2 862 716" stroke="#a5a195" stroke-width="7" fill="none" filter="url(#b3)" opacity=".8"/>
</g>
<path d="M535 703.8L1041.3 280M1011 275.2C1012.1 274.9 1015.3 273.4 1017.5 273.1C1019.7 272.8 1021.9 273.1 1024 273.4C1026.1 273.7 1027.1 273.9 1030 275C1032.9 276.1 1039.4 279.2 1041.3 280L1143.8 324.4C1151.5 331.9 1175.6 354.9 1190 369.4C1204.4 383.9 1219.3 400.2 1230 411.5C1240.7 422.8 1246.9 429.4 1254 437.4C1261.1 445.4 1266.4 452.2 1272.6 459.6C1278.8 467 1284.8 474.2 1291 481.9C1297.2 489.6 1303.4 497.3 1309.6 505.9C1315.8 514.5 1322.8 525.1 1328 533.7C1333.2 542.3 1338.4 553.5 1340.5 557.5M535.2 702.5C537.5 705.7 543.4 715 548.8 721.7C554.2 728.4 560.9 735.6 567.5 742.5C574.1 749.4 580.7 756 588.3 763.3C595.9 770.6 603.6 778.1 613.3 786.3C623 794.5 640.8 808.1 646.3 812.5M503 733.8C507.5 738.2 521.3 751.5 530 760C538.7 768.5 546.7 776.7 555 785C563.3 793.3 571.7 801.7 580 810C588.3 818.3 597.2 827.9 605 835C612.8 842.1 623.3 849.6 627 852.5M510 698.8C511.3 698.6 515.2 697.4 518 697.5C520.8 697.6 524.2 698.5 527 699.5C529.8 700.5 533.7 703.1 535 703.8M535 703.8C532.8 705.2 526.2 708.8 522 712C517.8 715.2 513.2 719.4 510 723C506.8 726.6 504.2 732 503 733.8M498 760C498 753.3 497.4 728.8 498 720C498.6 711.2 499.3 711 501.3 707.5C503.3 704 508.6 700.2 510 698.8M646.3 812.5L695.6 769M695.6 769C694.9 762.6 691.8 742.3 691.3 730.6C690.8 718.9 690.6 711.1 692.4 698.6C694.2 686.1 696.9 671.9 702 655.9C707.1 639.9 717 616.9 723.3 602.6C729.6 588.3 734.4 579.3 740 570C745.6 560.7 751.2 553.9 756.7 546.7C762.2 539.5 766.9 533.9 773.3 526.7C779.7 519.5 786.7 511.1 795 503.3C803.3 495.5 813 487.5 823.3 480C833.6 472.5 845.6 464.7 856.7 458.3C867.8 451.9 878.9 446.6 890 441.7C901.1 436.8 912.2 432.4 923.3 429.2C934.4 426 947.2 423.9 956.7 422.5C966.2 421.1 970.6 420.4 980 421C989.4 421.6 1002.2 423.3 1013.3 425.8C1024.4 428.3 1035.6 431.5 1046.7 435.8C1057.8 440.1 1068.9 445.2 1080 451.7C1091.1 458.2 1102.2 465.8 1113.3 475C1124.4 484.2 1137 496.1 1146.7 506.7C1156.4 517.2 1164.8 528.9 1171.7 538.3C1178.6 547.7 1183.3 555.2 1188.3 563.3C1193.3 571.4 1197.8 579.8 1201.7 586.7C1205.7 593.7 1210.3 602 1212 605M715.8 752.5C715.8 747.1 714.9 732.1 715.8 719.9C716.7 707.7 718.2 692.9 721.2 679.4C724.2 665.9 729.2 650.8 734 638.9C738.8 627 742 620.3 750 608C758 595.7 772.2 576.9 781.7 565C791.2 553.1 797 546.2 806.7 536.7C816.4 527.2 828.9 516.6 840 508.3C851.1 500 862.2 493.1 873.3 486.7C884.4 480.3 895.6 474.6 906.7 470C917.8 465.4 930.3 461.8 940 459.2C949.7 456.6 957 455.5 965 454.6C973 453.7 980 453.1 988 453.6C996 454.1 1003.5 455.5 1013.3 457.8C1023.1 460.1 1035.6 463.2 1046.7 467.5C1057.8 471.8 1068.9 476.6 1080 483.3C1091.1 490 1103.6 499 1113.3 507.5C1123 516 1131.6 526.3 1138.3 534.2C1145 542.1 1149.4 549 1153.3 555C1157.2 561 1160.3 567.5 1161.7 570M979.2 559.2C975.5 560.7 963.2 565.1 956.7 568.3C950.2 571.5 945.6 574.7 940 578.3C934.4 581.9 928.8 585.5 923.3 590C917.8 594.5 912.2 599.5 906.7 605C901.2 610.5 895.6 616.3 890 623.3C884.4 630.2 878 639.5 873.3 646.7C868.6 653.9 864.8 660.9 861.7 666.7C858.7 672.5 856.1 679.2 855 681.7C851.8 683.7 845.5 688.2 836 693.5C826.5 698.8 809.7 706.6 798 713.5C786.3 720.4 775.6 728.8 766 734.8C756.4 740.8 747.5 746.6 740.4 749.8C733.3 753 727.4 753.5 723.3 754C719.2 754.5 717 752.8 715.8 752.5M855 681.7C855.3 682.8 855 686.1 856.7 688.3C858.4 690.5 862.5 693.3 865 695C867.5 696.7 870.6 697.8 871.7 698.3M980.8 570.8C976.8 572.9 963.5 579.3 956.7 583.3C949.9 587.3 945.6 590.5 940 595C934.4 599.5 928.8 604.5 923.3 610C917.8 615.5 912.2 621.3 906.7 628.3C901.2 635.2 894.7 644.2 890 651.7C885.3 659.2 881.3 665.5 878.3 673.3C875.2 681.1 872.8 694.1 871.7 698.3M987.5 573.3C988.6 576.6 991.8 587 994.4 593.3C997 599.6 999.7 605.1 1003 611C1006.3 616.9 1008.8 621.5 1014.4 628.9C1020 636.3 1029.3 647.5 1036.7 655.6C1044.1 663.8 1051.5 670.4 1058.9 677.8C1066.3 685.2 1075 694 1081.1 700C1087.2 706 1093.1 711.5 1095.5 713.8M990 563.3C993.3 562.3 1002.5 559.5 1010 557.5C1017.5 555.5 1026.7 553 1035 551.3C1043.3 549.6 1051.7 547.9 1060 547.5C1068.3 547.1 1076.7 548 1085 548.8C1093.3 549.6 1101.7 550.6 1110 552.5C1118.3 554.4 1126.7 557.1 1135 560C1143.3 562.9 1151.7 565.8 1160 570C1168.3 574.2 1176.2 579.2 1185 585C1193.8 590.8 1203.5 597.9 1212.5 605C1221.5 612.1 1234.4 623.8 1238.8 627.5M979.2 559.2L981 571L981 571L984 561L987.5 560L988 572L990 563.3" fill="none" stroke="#0c0c0c" stroke-width="1.1" stroke-linejoin="round" stroke-linecap="round"/>
</svg>
<svg class="abs" style="left:1790px;top:150px" width="130" height="120" viewBox="1790 150 130 120"><defs><filter id="vcb" x="-50%" y="-50%" width="200%" height="200%"><feGaussianBlur stdDeviation="5"/></filter></defs><path d="M1830 213L1858 243L1894 214L1890 190L1850 200Z" fill="#9a9a9a" opacity=".55" filter="url(#vcb)"/><path d="M1820.600 184.400L1857.200 160L1892.800 187.200L1855.600 217.200Z" fill="#efefef" fill-opacity=".86"/><path d="M1820.600 184.400L1855.600 217.200L1855.600 240.600L1825 212.200Z" fill="#e9e9ea" fill-opacity=".86"/><path d="M1855.600 217.200L1892.800 187.200L1887.800 212.200L1855.600 240.600Z" fill="#ededee" fill-opacity=".86"/><path d="M1825.0 181.5L1852.8 162.9M1861.5 163.3L1888.5 183.9M1888.3 190.8L1860.1 213.6M1851.4 213.3L1824.8 188.3M1855.6 220.0L1855.6 237.8M1828.7 215.6L1851.9 237.2M1859.5 237.2L1883.9 215.6M1888.4 209.2L1892.2 190.2M1821.1 187.7L1824.5 208.9" fill="none" stroke="#757575" stroke-width=".9" stroke-dasharray="5.500 3"/><path d="M1825 212.200L1818.300 180" stroke="#5a5af0" stroke-width="1.600"/><path d="M1825 212.200L1861 247" stroke="#f08a8a" stroke-width="1.600"/><text x="1811" y="180" font-family="Liberation Sans" font-size="13" fill="#6a6af4">Z</text><text x="1861" y="257" font-family="Liberation Sans" font-size="13" fill="#f58a8a">X</text><text transform="matrix(.82 .5 -.72 .55 1845.500 184)" font-family="Liberation Sans" font-size="11.500" fill="#8a8e96">TOP</text><text transform="matrix(.78 .72 0 1 1828.500 204)" font-family="Liberation Sans" font-size="7.500" fill="#9a9ea6" font-style="italic">FRONT</text><text transform="matrix(.78 -.62 0 1 1863.500 228)" font-family="Liberation Sans" font-size="7.500" fill="#9a9ea6" font-style="italic">RIGHT</text></svg>
<div class="abs" style="left:841px;top:962px;width:237px;height:24px;background:#f1f1f1"></div>
<svg class="abs" style="left:843px;top:965px" width="20" height="18" viewBox="0 0 20 18"><path d="M9.500 3v14M7.200 5.500L9.500 1.500l2.300 4z" stroke="#333" stroke-width="1.100" fill="#fff"/><rect x="8.600" y="3.500" width="1.800" height="13" fill="#fff" stroke="#333" stroke-width=".8"/><path d="M12 7.500c3 .5 4.500 1.500 4.500 2.700 0 1.800-3.500 3-7 3-2 0-4-.4-5.500-1" stroke="#333" stroke-width="1.200" fill="none"/><path d="M5.500 9.500l-3.500 2.500 4 2z" fill="#333"/></svg>
<div class="abs" style="left:864.5px;top:972px;width:0;height:0;border-left:3.0px solid transparent;border-right:3.0px solid transparent;border-top:4px solid #222"></div>
<svg class="abs" style="left:876px;top:965px" width="18" height="18" viewBox="0 0 18 18"><path d="M2 7.500l3-3.500v2l3.500-2.500v2l3-2v2l3.500-1.500v3.500" fill="#bfc3cc" stroke="#333" stroke-width=".9" stroke-linejoin="round"/><rect x="1.500" y="7.500" width="15" height="9" fill="#f4f4f4" stroke="#333" stroke-width="1.100"/><rect x="4.500" y="10" width="9" height="4" fill="#c8ccd6" stroke="#333" stroke-width="1"/></svg>
<svg class="abs" style="left:902px;top:964px" width="18" height="20" viewBox="0 0 18 20"><path d="M5.500 11V4.500a1.200 1.200 0 0 1 2.400 0V9V3a1.200 1.200 0 0 1 2.400 0V9V3.800a1.200 1.200 0 0 1 2.400 0V10V6a1.100 1.100 0 0 1 2.200 0v7c0 3.500-2 5.500-5 5.500-2.500 0-3.800-1-5-3L2 11.500c-.6-1.200.8-2 1.700-1z" fill="#fff" stroke="#333" stroke-width="1" stroke-linejoin="round"/></svg>
<svg class="abs" style="left:928px;top:965px" width="20" height="18" viewBox="0 0 20 18"><circle cx="7" cy="8.500" r="4.800" fill="#dfeaf0" stroke="#333" stroke-width="1.300"/><path d="M10.500 12l4 4.200" stroke="#333" stroke-width="2.600" stroke-linecap="round"/><path d="M13.500 4.200h4M15.500 2.200v4M13.500 8h4" stroke="#333" stroke-width="1.100"/></svg>
<svg class="abs" style="left:954px;top:964px" width="19" height="20" viewBox="0 0 19 20"><path d="M1.500 2.500h14.500v13H1.500z" fill="none" stroke="#333" stroke-width="1" stroke-dasharray="2.500 1.800"/><circle cx="8.500" cy="8.500" r="5.800" fill="#e3edf0" stroke="#333" stroke-width="1.300"/><path d="M12.800 13l4 4.300" stroke="#333" stroke-width="2.600" stroke-linecap="round"/></svg>
<div class="abs" style="left:976px;top:972px;width:0;height:0;border-left:3.0px solid transparent;border-right:3.0px solid transparent;border-top:4px solid #222"></div>
<svg class="abs" style="left:987px;top:965px" width="19" height="18" viewBox="0 0 19 18"><rect x="1.500" y="1.500" width="15" height="11.500" rx="1" fill="#f1f1f1" stroke="#333" stroke-width="1.200"/><rect x="3.500" y="3.500" width="11" height="7.500" fill="#8faadb"/><path d="M7 13v2.500h4V13M5 16.500h8" stroke="#333" stroke-width="1.100" fill="#ddd"/></svg>
<div class="abs" style="left:1006px;top:972px;width:0;height:0;border-left:3.0px solid transparent;border-right:3.0px solid transparent;border-top:4px solid #222"></div>
<svg class="abs" style="left:1018px;top:965px" width="18" height="18" viewBox="0 0 18 18"><defs><linearGradient id="gg" x1="0" y1="0" x2="0" y2="1"><stop offset="0" stop-color="#f6f6f6"/><stop offset="1" stop-color="#9fa5b4"/></linearGradient></defs><rect x="1.500" y="1.500" width="15" height="15" fill="url(#gg)"/><path d="M1.500 1.500h15v15h-15zM5.300 1.500v15M9 1.500v15M12.700 1.500v15M1.500 5.300h15M1.500 9h15M1.500 12.700h15" stroke="#444" stroke-width=".9" fill="none"/></svg>
<div class="abs" style="left:1037px;top:972px;width:0;height:0;border-left:3.0px solid transparent;border-right:3.0px solid transparent;border-top:4px solid #222"></div>
<svg class="abs" style="left:1049px;top:966px" width="18" height="16" viewBox="0 0 18 16"><rect x=".8" y=".8" width="16.400" height="14" rx="1" fill="#4d67a8"/><g fill="#b7c8ec"><rect x="2.500" y="2.500" width="5.500" height="4.300"/><rect x="10" y="2.500" width="5.500" height="4.300"/><rect x="2.500" y="8.800" width="5.500" height="4.300"/><rect x="10" y="8.800" width="5.500" height="4.300"/></g></svg>
<div class="abs" style="left:1068px;top:972px;width:0;height:0;border-left:3.0px solid transparent;border-right:3.0px solid transparent;border-top:4px solid #222"></div>
<div class="abs" style="left:0;top:0;width:1920px;height:23px;background:#fff"></div>
<svg class="abs" style="left:3px;top:3px" width="16" height="17" viewBox="0 0 16 17"><rect x=".5" y=".5" width="15" height="16" rx="2" fill="#f6d9b8"/><path d="M4 3h8.5v2.6H7v2.6h4.6v2.5H7V14H4z" fill="#e8791d"/><path d="M4 3h3v11H4z" fill="#c75a10"/><rect x="9" y="12" width="5" height="2.5" fill="#f4a65c"/></svg>
<div class="abs" style="left:23.5px;top:4.58px;font-size:12.2px;line-height:14.03px;color:#7d7d7d;white-space:nowrap;transform:scaleX(0.9611);transform-origin:0 0;">Autodesk Fusion 360 (Personal - Not for Commercial Use)</div>
<svg class="abs" style="left:1795px;top:4px" width="110" height="14" viewBox="0 0 110 14"><path d="M4 6.5h10" stroke="#777" stroke-width="1"/><path d="M49.5 3.5h8v8h-8zM51.5 3.5v-2h8v8h-2" stroke="#777" stroke-width="1" fill="none"/><path d="M95 1.5l10 10M105 1.5l-10 10" stroke="#666" stroke-width="1.1"/></svg>
<div class="abs" style="left:0;top:23px;width:1920px;height:32px;background:#c6c6c6"></div>
<div class="abs" style="left:0;top:23px;width:1920px;height:3px;background:#cfcfcf"></div>
<div class="abs" style="left:193px;top:26px;width:1463px;height:30px;background:#f1f1f1;border-radius:5px 5px 0 0"></div>
<svg class="abs" style="left:8px;top:31px" width="16" height="16" viewBox="0 0 16 16"><rect x="1" y="1" width="4" height="4" fill="#5e5e5e"/><rect x="1" y="6" width="4" height="4" fill="#5e5e5e"/><rect x="1" y="11" width="4" height="4" fill="#5e5e5e"/><rect x="6" y="1" width="4" height="4" fill="#5e5e5e"/><rect x="6" y="6" width="4" height="4" fill="#5e5e5e"/><rect x="6" y="11" width="4" height="4" fill="#5e5e5e"/><rect x="11" y="1" width="4" height="4" fill="#5e5e5e"/><rect x="11" y="6" width="4" height="4" fill="#5e5e5e"/><rect x="11" y="11" width="4" height="4" fill="#5e5e5e"/></svg>
<svg class="abs" style="left:41px;top:30px" width="15" height="18" viewBox="0 0 15 18"><path d="M1 1h8l5 5v11H1z" fill="#5e5e5e"/><path d="M9 1v5h5" fill="#c6c6c6" stroke="#c6c6c6" stroke-width=".6"/><path d="M9.6 1.6l4 4h-4z" fill="#777"/></svg>
<div class="abs" style="left:61px;top:37px;width:0;height:0;border-left:3.5px solid transparent;border-right:3.5px solid transparent;border-top:4px solid #555"></div>
<svg class="abs" style="left:87px;top:31px" width="15" height="16" viewBox="0 0 15 16"><path d="M1 2.5a1.5 1.5 0 0 1 1.500-1.5h10a1.500 1.500 0 0 1 1.500 1.500v11a1.500 1.500 0 0 1-1.500 1.500h-10a1.500 1.500 0 0 1-1.500-1.500z" fill="#5e5e5e"/><rect x="3.5" y="2.5" width="8" height="4.500" fill="#c6c6c6"/><rect x="4" y="10" width="7" height="5" fill="#c6c6c6"/><rect x="5.500" y="11.500" width="4" height="3.500" fill="#5e5e5e"/></svg>
<svg class="abs" style="left:119px;top:31px" width="16" height="16" viewBox="0 0 16 16"><path d="M2.500 6.500h6.500a4.500 4.500 0 0 1 4.500 4.500v3" stroke="#5e5e5e" stroke-width="2" fill="none"/><path d="M6.500 2l-5 4.500 5 4.500" stroke="#5e5e5e" stroke-width="2" fill="none" stroke-linejoin="miter"/></svg>
<div class="abs" style="left:140px;top:37px;width:0;height:0;border-left:3.5px solid transparent;border-right:3.5px solid transparent;border-top:4px solid #555"></div>
<svg class="abs" style="left:159px;top:31px" width="16" height="16" viewBox="0 0 16 16"><path d="M13.500 6.500h-6.500a4.500 4.500 0 0 0-4.500 4.500v3" stroke="#999" stroke-width="2" fill="none"/><path d="M9.500 2l5 4.500-5 4.500" stroke="#999" stroke-width="2" fill="none"/></svg>
<div class="abs" style="left:179px;top:37px;width:0;height:0;border-left:3.5px solid transparent;border-right:3.5px solid transparent;border-top:4px solid #999"></div>
<svg class="abs" style="left:866px;top:33px" width="17" height="16" viewBox="0 0 17 16"><path d="M1 4l9-3 6 2.500v8.500l-7 3.500-8-3z" fill="#777"/><path d="M1 4l8 3 7-3.500M9 7v8.500" stroke="#f1f1f1" stroke-width="1" fill="none"/><path d="M1 4l8 3v8.500l-8-3z" fill="#666"/><path d="M9 7l7-3.500v8.500l-7 3.500z" fill="#8a8a8a"/></svg>
<div class="abs" style="left:888.5px;top:34.90px;font-size:12px;line-height:13.8px;color:#333;white-space:nowrap;transform:scaleX(1.0124);transform-origin:0 0;">генератор v6*</div>
<svg class="abs" style="left:1638px;top:36px" width="11" height="11" viewBox="0 0 11 11"><path d="M1.500 1.500l8 8M9.500 1.500l-8 8" stroke="#555" stroke-width="1.300"/></svg>
<div class="abs" style="left:1659px;top:27px;width:28px;height:28px;background:#b3b3b3;border-radius:3px"></div>
<svg class="abs" style="left:1666px;top:34px" width="14" height="14" viewBox="0 0 14 14"><path d="M7 .5v13M.5 7h13" stroke="#6a6a6a" stroke-width="2.500"/></svg>
<svg class="abs" style="left:1698px;top:30px" width="19" height="18" viewBox="0 0 19 18"><path d="M1 1h9l4 4v2l-6 6v4H1z" fill="#555"/><path d="M10 1v4h4" fill="#c6c6c6"/><path d="M15.500 6l2.500 2.500-7 7-3.500 1 1-3.500z" fill="#555" stroke="#c6c6c6" stroke-width=".8"/></svg>
<div class="abs" style="left:1719.5px;top:32.69px;font-size:11.5px;line-height:13.22px;color:#222;white-space:nowrap;transform:scaleX(0.9143);transform-origin:0 0;">10 of 10</div>
<svg class="abs" style="left:1783px;top:30px" width="18" height="18" viewBox="0 0 18 18"><circle cx="9" cy="9" r="7.500" fill="#555"/><circle cx="9" cy="9" r="5.600" fill="none" stroke="#c6c6c6" stroke-width="1.200"/><path d="M9 5v4.300h3.500" stroke="#c6c6c6" stroke-width="1.300" fill="none"/></svg>
<svg class="abs" style="left:1817px;top:30px" width="16" height="18" viewBox="0 0 16 18"><path d="M8 1.500a5 5 0 0 1 5 5v4l1.800 3H1.200l1.800-3v-4a5 5 0 0 1 5-5z" fill="#555"/><path d="M6.300 15a1.800 1.800 0 0 0 3.400 0z" fill="#555"/></svg>
<svg class="abs" style="left:1849px;top:30px" width="18" height="18" viewBox="0 0 18 18"><circle cx="9" cy="9" r="8" fill="#555"/><path d="M6.300 7.200a2.800 2.800 0 1 1 3.900 2.500c-.8.400-1.200.8-1.200 1.800" stroke="#c6c6c6" stroke-width="2" fill="none"/><circle cx="9" cy="13.800" r="1.200" fill="#c6c6c6"/></svg>
<svg class="abs" style="left:1884px;top:27px" width="26" height="26" viewBox="0 0 26 26"><defs><clipPath id="av"><circle cx="13" cy="13" r="12.500"/></clipPath><linearGradient id="avg" x1="0" y1="0" x2="0" y2="1"><stop offset="0" stop-color="#8ea3c2"/><stop offset="1" stop-color="#b9c4d6"/></linearGradient></defs><g clip-path="url(#av)"><rect width="26" height="26" fill="url(#avg)"/><ellipse cx="13.500" cy="10" rx="5.600" ry="7" fill="#44557a"/><path d="M2 27c0-7 5-9 11.500-9s11.500 2 11.500 9z" fill="#44557a"/><rect x="10.500" y="14" width="6" height="6" fill="#44557a"/></g></svg>
<div class="abs" style="left:0;top:55px;width:1920px;height:82px;background:#f1f1f1"></div>
<div class="abs" style="left:0;top:136px;width:1920px;height:1px;background:#d9d9d9"></div>
<div class="abs" style="left:12px;top:66px;width:110px;height:60px;border:1px solid #d6d6d6;border-radius:5px;background:#f4f4f4"></div>
<div class="abs" style="left:42.5px;top:89.39px;font-size:11.5px;line-height:13.22px;color:#2c2c2c;white-space:nowrap;transform:scaleX(0.8437);transform-origin:0 0;font-weight:bold;">DESIGN</div>
<div class="abs" style="left:84.5px;top:94.5px;width:0;height:0;border-left:3.5px solid transparent;border-right:3.5px solid transparent;border-top:4px solid #222"></div>
<div class="abs" style="left:150.8px;top:59.97px;font-size:11px;line-height:12.65px;color:#1b9ad8;white-space:nowrap;transform:scaleX(0.8846);transform-origin:0 0;">SOLID</div>
<div class="abs" style="left:228.3px;top:59.97px;font-size:11px;line-height:12.65px;color:#333;white-space:nowrap;transform:scaleX(0.8931);transform-origin:0 0;">SURFACE</div>
<div class="abs" style="left:321.3px;top:59.97px;font-size:11px;line-height:12.65px;color:#333;white-space:nowrap;transform:scaleX(0.8496);transform-origin:0 0;">MESH</div>
<div class="abs" style="left:394.5px;top:59.97px;font-size:11px;line-height:12.65px;color:#333;white-space:nowrap;transform:scaleX(0.8914);transform-origin:0 0;">SHEET METAL</div>
<div class="abs" style="left:507.5px;top:59.97px;font-size:11px;line-height:12.65px;color:#333;white-space:nowrap;transform:scaleX(0.8986);transform-origin:0 0;">PLASTIC</div>
<div class="abs" style="left:595.3px;top:59.97px;font-size:11px;line-height:12.65px;color:#333;white-space:nowrap;transform:scaleX(0.8453);transform-origin:0 0;">UTILITIES</div>
<div class="abs" style="left:138px;top:76px;width:55px;height:3px;background:#0d8fd8;border-radius:1.500px"></div>
<div class="abs" style="left:257.5px;top:120.47px;font-size:11px;line-height:12.65px;color:#333;white-space:nowrap;transform:scaleX(0.8630);transform-origin:0 0;">CREATE</div>
<div class="abs" style="left:299.3px;top:124.5px;width:0;height:0;border-left:3.0px solid transparent;border-right:3.0px solid transparent;border-top:3.5px solid #222"></div>
<div class="abs" style="left:503.7px;top:120.47px;font-size:11px;line-height:12.65px;color:#333;white-space:nowrap;transform:scaleX(0.8673);transform-origin:0 0;">MODIFY</div>
<div class="abs" style="left:545px;top:124.5px;width:0;height:0;border-left:3.0px solid transparent;border-right:3.0px solid transparent;border-top:3.5px solid #222"></div>
<div class="abs" style="left:634.7px;top:120.47px;font-size:11px;line-height:12.65px;color:#333;white-space:nowrap;transform:scaleX(0.9038);transform-origin:0 0;">ASSEMBLE</div>
<div class="abs" style="left:692px;top:124.5px;width:0;height:0;border-left:3.0px solid transparent;border-right:3.0px solid transparent;border-top:3.5px solid #222"></div>
<div class="abs" style="left:723.3px;top:120.47px;font-size:11px;line-height:12.65px;color:#333;white-space:nowrap;transform:scaleX(0.8892);transform-origin:0 0;">CONSTRUCT</div>
<div class="abs" style="left:788px;top:124.5px;width:0;height:0;border-left:3.0px solid transparent;border-right:3.0px solid transparent;border-top:3.5px solid #222"></div>
<div class="abs" style="left:822.5px;top:120.47px;font-size:11px;line-height:12.65px;color:#333;white-space:nowrap;transform:scaleX(0.8390);transform-origin:0 0;">INSPECT</div>
<div class="abs" style="left:866px;top:124.5px;width:0;height:0;border-left:3.0px solid transparent;border-right:3.0px solid transparent;border-top:3.5px solid #222"></div>
<div class="abs" style="left:901.3px;top:120.47px;font-size:11px;line-height:12.65px;color:#333;white-space:nowrap;transform:scaleX(0.8595);transform-origin:0 0;">INSERT</div>
<div class="abs" style="left:939.3px;top:124.5px;width:0;height:0;border-left:3.0px solid transparent;border-right:3.0px solid transparent;border-top:3.5px solid #222"></div>
<div class="abs" style="left:970.3px;top:120.47px;font-size:11px;line-height:12.65px;color:#333;white-space:nowrap;transform:scaleX(0.8693);transform-origin:0 0;">SELECT</div>
<div class="abs" style="left:1010.8px;top:124.5px;width:0;height:0;border-left:3.0px solid transparent;border-right:3.0px solid transparent;border-top:3.5px solid #222"></div>
<div class="abs" style="left:437px;top:81px;width:1px;height:51px;background:#dadada"></div>
<div class="abs" style="left:620px;top:81px;width:1px;height:51px;background:#dadada"></div>
<div class="abs" style="left:708px;top:81px;width:1px;height:51px;background:#dadada"></div>
<div class="abs" style="left:807px;top:81px;width:1px;height:51px;background:#dadada"></div>
<div class="abs" style="left:887px;top:81px;width:1px;height:51px;background:#dadada"></div>
<div class="abs" style="left:956px;top:81px;width:1px;height:51px;background:#dadada"></div>
<svg class="abs" style="left:136px;top:81px" width="36" height="36" viewBox="0 0 36 36"><path d="M2.500 3.500h27v20M2.500 3.500v27h14" stroke="#444" stroke-width="1.200" fill="none" stroke-dasharray="9 2"/><path d="M9 10h13M9 10v13" stroke="#555" stroke-width="1.100" stroke-dasharray="5 2" fill="none"/><path d="M22 10c0 8-5 13-13 13" stroke="#555" stroke-width="1.100" fill="none"/><g fill="#555"><rect x="1" y="2" width="3" height="3"/><rect x="28" y="2" width="3" height="3"/><rect x="1" y="29" width="3" height="3"/><rect x="7.500" y="8.500" width="3" height="3"/><rect x="20.500" y="8.500" width="3" height="3"/><rect x="7.500" y="21.500" width="3" height="3"/></g><path d="M26.500 20v14M19.500 27h14" stroke="#26a244" stroke-width="3.600"/></svg>
<svg class="abs" style="left:180px;top:81px" width="34" height="36" viewBox="0 0 34 36"><path d="M1 28l5-4h18l-5 4v4H1z" fill="#c9c9c9"/><path d="M19 28l5-4v4l-5 4z" fill="#aaa"/><path d="M1 6l5-5h18l-5 5z" fill="#8cc8f5"/><path d="M1 6h18v22H1z" fill="#5aa9e6"/><path d="M19 6l5-5v22l-5 5z" fill="#3d8fd1"/><path d="M29 4v25" stroke="#222" stroke-width="1.200"/><path d="M26.500 7.500l2.500-5.500 2.500 5.500z" fill="#222"/></svg>
<svg class="abs" style="left:221px;top:81px" width="36" height="36" viewBox="0 0 36 36"><path d="M2 19c7-9 22-9 30 0l-5 9c-5-5-14-5-19 0z" fill="#5aa9e6"/><path d="M2 19l0 5 6 6v-2z" fill="#3d8fd1"/><path d="M8 28c5-5 14-5 19 0v3c-5-5-14-5-19-1z" fill="#3d8fd1"/><path d="M2 19c7-9 22-9 30 0l-5 5.500c-5-5-14-5-19 0z" fill="#8cc8f5"/><path d="M27.500 24.500l5-5.500v6l-5 6z" fill="#fff" stroke="#333" stroke-width="1"/><path d="M5 10c7-6 19-6 27 1" stroke="#333" stroke-width="1.100" fill="none"/><path d="M2.500 12.500l2-5.500 3.500 4z" fill="#333"/></svg>
<svg class="abs" style="left:265px;top:81px" width="35" height="36" viewBox="0 0 35 36"><path d="M1.500 9.500l8-7.500h23l-8 7.500z" fill="#e4e4e4" stroke="#555" stroke-width="1"/><path d="M24.500 9.500l8-7.500v23l-8 8z" fill="#c4c4c4" stroke="#555" stroke-width="1"/><rect x="1.500" y="9.500" width="23" height="23.500" fill="#dcdcdc" stroke="#555" stroke-width="1"/><circle cx="13" cy="22" r="8" fill="#fff" stroke="#444" stroke-width="1.100"/><circle cx="12.500" cy="22.500" r="6" fill="#3d8fd1"/><circle cx="15.500" cy="19.500" r="4.500" fill="#fff"/></svg>
<svg class="abs" style="left:308px;top:83px" width="32" height="32" viewBox="0 0 32 32"><path d="M4.500 4.500h21M4.500 4.500v21M4.500 25.500h21" stroke="#444" stroke-width="1.100" fill="none"/><rect x="1.500" y="1.500" width="6" height="6" fill="#fff" stroke="#444" stroke-width="1"/><rect x="22" y="1" width="7" height="7" fill="#5aa9e6"/><rect x="1" y="22" width="7" height="7" fill="#5aa9e6"/><rect x="22" y="22" width="7" height="7" fill="#5aa9e6"/></svg>
<svg class="abs" style="left:350px;top:80px" width="36" height="38" viewBox="0 0 36 38"><path d="M3 12c0-6 3-9 9-9h10c5 0 7 3 7 8v14c0 6-4 10-9 10H11c-5 0-8-3-8-8z" fill="#a98be0" stroke="#7c52c8" stroke-width="1.200"/><path d="M5 13c0-4 3-7 7-7h9v10H5z" fill="#c9b3f0"/><path d="M24 14l4-3v14c0 4-2 7-4 8z" fill="#8a63d2"/><path d="M4 20h20M14 6v27M24 14v18" stroke="#7c52c8" stroke-width="1" fill="none"/><path d="M26 0l1.800 5 4.700-2.500-2.500 4.700 5 1.800-5 1.800 2.500 4.700-4.700-2.500-1.800 5-1.800-5-4.700 2.500 2.500-4.700-5-1.800 5-1.800-2.500-4.700 4.700 2.500z" fill="#f4a21c"/></svg>
<svg class="abs" style="left:394px;top:84px" width="36" height="30" viewBox="0 0 36 30"><path d="M3 17l23-12c5-2 8 6 4 9L8 25z" fill="#8cc8f5" stroke="#3d8fd1" stroke-width="1"/><ellipse cx="7" cy="20.500" rx="5" ry="5.500" fill="#5aa9e6" stroke="#3d8fd1" stroke-width="1"/><ellipse cx="7" cy="20.500" rx="2.600" ry="3" fill="#3d8fd1"/></svg>
<svg class="abs" style="left:448px;top:81px" width="34" height="36" viewBox="0 0 34 36"><path d="M2.500 9l6-7h6v25l-6 6h-6z" fill="#e2e2e2" stroke="#555" stroke-width="1"/><path d="M9.500 9l6-7h8l-6 7z" fill="#8cc8f5"/><path d="M9.500 9h8v24h-8z" fill="#5aa9e6"/><path d="M17.500 9l6-7v24l-6 7z" fill="#3d8fd1"/><path d="M21 17.500h8" stroke="#222" stroke-width="1.300"/><path d="M27.500 14.500l5 3-5 3z" fill="#222"/><rect x="19.500" y="14.500" width="5" height="6" fill="#fff" opacity=".0"/></svg>
<svg class="abs" style="left:491px;top:81px" width="35" height="36" viewBox="0 0 35 36"><path d="M1.500 9.500l7-7.500h8c9 0 15 6 15 15v8l-7 7.500h-23z" fill="#dedede" stroke="#555" stroke-width="1"/><path d="M24.500 32.500l7-7.500v-6l-7 6z" fill="#bdbdbd" stroke="#555" stroke-width=".8"/><path d="M13 4l3.500-2c9 0 15 6 15 15v2l-6.500 6c0-11-4-17-12-21z" fill="#5aa9e6"/></svg>
<svg class="abs" style="left:534px;top:81px" width="35" height="36" viewBox="0 0 35 36"><path d="M1.500 9.500l8-7.500h23l-8 7.500z" fill="#e8e8e8" stroke="#555" stroke-width="1"/><path d="M24.500 9.500l8-7.500v23l-8 8z" fill="#c6c6c6" stroke="#555" stroke-width="1"/><rect x="1.500" y="9.500" width="23" height="23.500" fill="#dcdcdc" stroke="#555" stroke-width="1"/><rect x="5" y="13" width="16" height="16.500" fill="#f4f4f4"/><path d="M5 13h7v10h9v6.500H5z" fill="#5aa9e6"/><path d="M5 29.500l4-5.500h12v5.500z" fill="#8cc8f5"/><path d="M5 13l4 2v9l-4 5.500z" fill="#3d8fd1"/></svg>
<svg class="abs" style="left:576px;top:81px" width="36" height="34" viewBox="0 0 36 34"><path d="M3 24h22v9H3z" fill="#dadada" stroke="#666" stroke-width=".8"/><path d="M25 24l6-5v9l-6 5z" fill="#bcbcbc" stroke="#666" stroke-width=".8"/><path d="M3 8l6-6h22l-6 6z" fill="#8cc8f5"/><path d="M3 8h22v9H3z" fill="#5aa9e6"/><path d="M25 8l6-6v9l-6 6z" fill="#3d8fd1"/><path d="M1 21h24l9-7" stroke="#2f86d6" stroke-width="1.600" fill="none"/></svg>
<svg class="abs" style="left:646px;top:80px" width="36" height="38" viewBox="0 0 36 38"><path d="M2.500 23.500h12v12h-12zM14.500 23.500h12v12h-12z" fill="#dcdcdc" stroke="#666" stroke-width="1"/><path d="M14.500 23.500l4-4h12l-4 4zM26.500 23.500l4-4v12l-4 4z" fill="#eaeaea" stroke="#666" stroke-width="1"/><path d="M2.500 11l4-5h12l-4 5z" fill="#8cc8f5"/><path d="M2.500 11h12v12h-12z" fill="#5aa9e6"/><path d="M14.500 11l4-5v12l-4 5z" fill="#3d8fd1"/><path d="M26 2l1.600 4.600 4.400-2.200-2.200 4.400 4.600 1.600-4.600 1.600 2.200 4.400-4.400-2.200-1.600 4.600-1.600-4.600-4.400 2.200 2.200-4.400-4.600-1.600 4.600-1.600-2.200-4.400 4.400 2.200z" fill="#f4a21c"/></svg>
<svg class="abs" style="left:742px;top:81px" width="36" height="36" viewBox="0 0 36 36"><path d="M2.500 10.500l8-8.500h6v22l-8 8.500h-6z" fill="#e3e3e3" stroke="#555" stroke-width="1"/><path d="M2.500 10.500h6l8-8.500" fill="none" stroke="#555" stroke-width="1"/><path d="M2.500 10.500h6v22" fill="none" stroke="#555" stroke-width="1"/><path d="M10 12l9-10v22l-9 9z" fill="#5bbf7b"/><path d="M23 10l9-9v22l-9 9z" fill="#e39a68"/></svg>
<svg class="abs" style="left:832px;top:88px" width="32" height="22" viewBox="0 0 32 22"><path d="M2.500 1v9M29.500 1v9M4 5.500h24" stroke="#555" stroke-width="1.100"/><path d="M3.500 5.500l4-2.500v5zM28.500 5.500l-4-2.500v5z" fill="#555"/><rect x="2" y="11.500" width="28" height="6" fill="#f5a10f"/><path d="M5.500 11.500v2.500M9.500 11.500v3.500M13.500 11.500v2.500M17.500 11.500v3.500M21.500 11.500v2.500M25.500 11.500v3.500" stroke="#b06a00" stroke-width="1"/></svg>
<svg class="abs" style="left:906px;top:82px" width="31" height="31" viewBox="0 0 31 31"><rect x="1" y="1" width="29" height="29" fill="#8ccaf8"/><rect x="1.500" y="1.500" width="28" height="28" fill="none" stroke="#5a9fd6" stroke-width="1"/><path d="M1 20c4-7 9-9 13-1l4 5c3-5 7-6 11 0v6H1z" fill="#3e8fcf"/><circle cx="22" cy="9" r="3.300" fill="#f8f5b8"/></svg>
<div class="abs" style="left:975px;top:79px;width:38px;height:38px;background:#0696d7"></div>
<svg class="abs" style="left:975px;top:79px" width="38" height="38" viewBox="0 0 38 38"><rect x="3.500" y="3.500" width="27" height="21" fill="none" stroke="#a6e36e" stroke-width="1.200" stroke-dasharray="4 2.500"/><path d="M24 17l11.500 9-5 .8 3 6-2.600 1.300-3-6-3.900 3.400z" fill="#fff"/></svg>
<div class="abs" style="left:4px;top:141px;width:300px;height:25px;background:#f1f1f1;border:1px solid #c6c6c6"></div>
<svg class="abs" style="left:9px;top:149px" width="11" height="9" viewBox="0 0 11 9"><path d="M5 0v8L.5 4zM10.500 0v8L6 4z" fill="#333"/></svg>
<div class="abs" style="left:29.4px;top:146.98px;font-size:11px;line-height:12.65px;color:#4a4a4a;white-space:nowrap;transform:scaleX(0.9025);transform-origin:0 0;">BROWSER</div>
<svg class="abs" style="left:282px;top:148px" width="10" height="10" viewBox="0 0 10 10"><circle cx="5" cy="5" r="4.600" fill="#222"/><path d="M2.500 5h5" stroke="#f1f1f1" stroke-width="1.300"/></svg>
<div class="abs" style="left:299px;top:148px;width:2px;height:10px;border-left:1px solid #777;border-right:1px solid #aaa"></div>
<div class="abs" style="left:40px;top:171px;width:167px;height:20px;background:rgba(241,241,241,.93)"></div>
<svg class="abs" style="left:21px;top:175px" width="12" height="12" viewBox="0 0 12 12"><defs><linearGradient id="to175" x1="0" y1="0" x2="1" y2="1"><stop offset=".4" stop-color="#ccc"/><stop offset="1" stop-color="#666"/></linearGradient></defs><path d="M11 .8v10.200H.8z" fill="url(#to175)" stroke="#333" stroke-width="1.100" stroke-linejoin="round"/></svg>
<svg class="abs" style="left:43px;top:175px" width="16" height="13" viewBox="0 0 16 13"><path d="M.5 6.500c3-5.500 12-5.500 15 0c-3 5.500-12 5.500-15 0z" fill="#8c8c8c"/><circle cx="8" cy="6.500" r="3.300" fill="#f1f1f1"/><circle cx="8" cy="6.500" r="2" fill="#8c8c8c"/></svg>
<div class="abs" style="left:65px;top:173px;width:118px;height:16px;background:#999"></div>
<svg class="abs" style="left:67px;top:172.5px" width="18" height="17" viewBox="0 0 18 18"><path d="M2.500 5.500l3.500-3.500h10v10l-3.500 3.500h-10z" fill="#eef0f4" stroke="#444" stroke-width="1.100" stroke-linejoin="round"/><path d="M2.500 5.500h10v10M12.500 5.500l3.500-3.500" stroke="#444" stroke-width="1" fill="none"/><path d="M12.500 5.500l3.500-3.500v10l-3.500 3.500z" fill="#c8ccd4"/></svg>
<div class="abs" style="left:98.2px;top:174.98px;font-size:11px;line-height:12.65px;color:#fff;white-space:nowrap;transform:scaleX(1.0418);transform-origin:0 0;font-weight:bold;">генератор v6</div>
<svg class="abs" style="left:187px;top:174px" width="14" height="14" viewBox="0 0 14 14"><circle cx="7" cy="7" r="5.800" fill="#fff" stroke="#222" stroke-width="1.200"/><circle cx="7" cy="7" r="2.600" fill="#222"/></svg>
<svg class="abs" style="left:39px;top:198px" width="11" height="14" viewBox="0 0 11 14"><path d="M1.500 1.500l8 5.500-8 5.500z" fill="#fff" stroke="#333" stroke-width="1.300" stroke-linejoin="round"/></svg>
<div class="abs" style="left:58px;top:195px;width:134px;height:20px;background:rgba(241,241,241,.93)"></div>
<svg class="abs" style="left:60px;top:196px" width="18" height="18" viewBox="0 0 18 18"><g fill="#8a8a8a"><circle cx="9" cy="9" r="5.800"/><rect x="7.300" y=".8" width="3.400" height="16.400" transform="rotate(0 9 9)"/><rect x="7.300" y=".8" width="3.400" height="16.400" transform="rotate(45 9 9)"/><rect x="7.300" y=".8" width="3.400" height="16.400" transform="rotate(90 9 9)"/><rect x="7.300" y=".8" width="3.400" height="16.400" transform="rotate(135 9 9)"/></g><circle cx="9" cy="9" r="2.400" fill="#f1f1f1"/></svg>
<div class="abs" style="left:91.0px;top:198.98px;font-size:11px;line-height:12.65px;color:#222;white-space:nowrap;transform:scaleX(0.9642);transform-origin:0 0;">Document Settings</div>
<svg class="abs" style="left:39px;top:222px" width="11" height="14" viewBox="0 0 11 14"><path d="M1.500 1.500l8 5.500-8 5.500z" fill="#fff" stroke="#333" stroke-width="1.300" stroke-linejoin="round"/></svg>
<div class="abs" style="left:58px;top:219px;width:110px;height:20px;background:rgba(241,241,241,.93)"></div>
<svg class="abs" style="left:61px;top:222px" width="17" height="14" viewBox="0 0 17 14"><path d="M.5 1h6l1 2H.5z" fill="#8a8a8a"/><path d="M.5 3.500h16v10H.5z" fill="#8f8f8f"/></svg>
<div class="abs" style="left:91.0px;top:222.98px;font-size:11px;line-height:12.65px;color:#222;white-space:nowrap;transform:scaleX(1.0036);transform-origin:0 0;">Named Views</div>
<svg class="abs" style="left:39px;top:246px" width="11" height="14" viewBox="0 0 11 14"><path d="M1.500 1.500l8 5.500-8 5.500z" fill="#fff" stroke="#333" stroke-width="1.300" stroke-linejoin="round"/></svg>
<div class="abs" style="left:58px;top:243px;width:95px;height:20px;background:rgba(241,241,241,.93)"></div>
<svg class="abs" style="left:61px;top:247px" width="16" height="13" viewBox="0 0 16 13"><path d="M1 6.500c3-5 11-5 14 0c-3 5-11 5-14 0z" fill="none" stroke="#9a9a9a" stroke-width="1"/><circle cx="8" cy="6.500" r="2.600" fill="none" stroke="#9a9a9a" stroke-width="1"/><path d="M3 1l10 11" stroke="#9a9a9a" stroke-width="1.100"/></svg>
<svg class="abs" style="left:86px;top:246px" width="17" height="14" viewBox="0 0 17 14"><path d="M.5 1h6l1 2H.5z" fill="#8a8a8a"/><path d="M.5 3.500h16v10H.5z" fill="#8f8f8f"/></svg>
<div class="abs" style="left:116.3px;top:246.98px;font-size:11px;line-height:12.65px;color:#222;white-space:nowrap;transform:scaleX(0.9441);transform-origin:0 0;">Origin</div>
<svg class="abs" style="left:39px;top:271px" width="12" height="12" viewBox="0 0 12 12"><defs><linearGradient id="to271" x1="0" y1="0" x2="1" y2="1"><stop offset=".4" stop-color="#ccc"/><stop offset="1" stop-color="#666"/></linearGradient></defs><path d="M11 .8v10.200H.8z" fill="url(#to271)" stroke="#333" stroke-width="1.100" stroke-linejoin="round"/></svg>
<div class="abs" style="left:58px;top:267px;width:103px;height:20px;background:rgba(241,241,241,.93)"></div>
<svg class="abs" style="left:61px;top:271px" width="16" height="13" viewBox="0 0 16 13"><path d="M.5 6.500c3-5.500 12-5.500 15 0c-3 5.500-12 5.500-15 0z" fill="#8c8c8c"/><circle cx="8" cy="6.500" r="3.300" fill="#f1f1f1"/><circle cx="8" cy="6.500" r="2" fill="#8c8c8c"/></svg>
<svg class="abs" style="left:86px;top:270px" width="17" height="14" viewBox="0 0 17 14"><path d="M.5 1h6l1 2H.5z" fill="#8a8a8a"/><path d="M.5 3.500h16v10H.5z" fill="#8f8f8f"/></svg>
<div class="abs" style="left:116.3px;top:270.98px;font-size:11px;line-height:12.65px;color:#222;white-space:nowrap;transform:scaleX(0.9663);transform-origin:0 0;">Bodies</div>
<div class="abs" style="left:76px;top:291px;width:99px;height:20px;background:rgba(241,241,241,.93)"></div>
<svg class="abs" style="left:79px;top:295px" width="16" height="13" viewBox="0 0 16 13"><path d="M1 6.500c3-5 11-5 14 0c-3 5-11 5-14 0z" fill="none" stroke="#9a9a9a" stroke-width="1"/><circle cx="8" cy="6.500" r="2.600" fill="none" stroke="#9a9a9a" stroke-width="1"/><path d="M3 1l10 11" stroke="#9a9a9a" stroke-width="1.100"/></svg>
<svg class="abs" style="left:104px;top:292px" width="17" height="17" viewBox="0 0 17 17"><defs><linearGradient id="bi292" x1="0" y1="0" x2="1" y2="0"><stop offset="0" stop-color="#fff"/><stop offset="1" stop-color="#c9ccd4"/></linearGradient></defs><rect x="1" y="1" width="15" height="15" rx="4" fill="#fff" stroke="#444" stroke-width="1.200"/><path d="M4 6c3 1.500 6 1.500 9 0v7c0 1.500-1 2-2 2H6c-1 0-2-.5-2-2z" fill="url(#bi292)"/></svg>
<div class="abs" style="left:134.1px;top:294.98px;font-size:11px;line-height:12.65px;color:#222;white-space:nowrap;transform:scaleX(0.9875);transform-origin:0 0;">Body5</div>
<div class="abs" style="left:76px;top:315px;width:99px;height:20px;background:rgba(241,241,241,.93)"></div>
<svg class="abs" style="left:79px;top:319px" width="16" height="13" viewBox="0 0 16 13"><path d="M1 6.500c3-5 11-5 14 0c-3 5-11 5-14 0z" fill="none" stroke="#9a9a9a" stroke-width="1"/><circle cx="8" cy="6.500" r="2.600" fill="none" stroke="#9a9a9a" stroke-width="1"/><path d="M3 1l10 11" stroke="#9a9a9a" stroke-width="1.100"/></svg>
<svg class="abs" style="left:104px;top:316px" width="17" height="17" viewBox="0 0 17 17"><defs><linearGradient id="bi316" x1="0" y1="0" x2="1" y2="0"><stop offset="0" stop-color="#fff"/><stop offset="1" stop-color="#c9ccd4"/></linearGradient></defs><rect x="1" y="1" width="15" height="15" rx="4" fill="#fff" stroke="#444" stroke-width="1.200"/><path d="M4 6c3 1.500 6 1.500 9 0v7c0 1.500-1 2-2 2H6c-1 0-2-.5-2-2z" fill="url(#bi316)"/></svg>
<div class="abs" style="left:134.1px;top:318.98px;font-size:11px;line-height:12.65px;color:#222;white-space:nowrap;transform:scaleX(0.9875);transform-origin:0 0;">Body6</div>
<div class="abs" style="left:76px;top:339px;width:99px;height:20px;background:rgba(241,241,241,.93)"></div>
<svg class="abs" style="left:79px;top:343px" width="16" height="13" viewBox="0 0 16 13"><path d="M.5 6.500c3-5.500 12-5.500 15 0c-3 5.500-12 5.500-15 0z" fill="#8c8c8c"/><circle cx="8" cy="6.500" r="3.300" fill="#f1f1f1"/><circle cx="8" cy="6.500" r="2" fill="#8c8c8c"/></svg>
<svg class="abs" style="left:104px;top:340px" width="17" height="17" viewBox="0 0 17 17"><defs><linearGradient id="bi340" x1="0" y1="0" x2="1" y2="0"><stop offset="0" stop-color="#fff"/><stop offset="1" stop-color="#c9ccd4"/></linearGradient></defs><rect x="1" y="1" width="15" height="15" rx="4" fill="#fff" stroke="#444" stroke-width="1.200"/><path d="M4 6c3 1.500 6 1.500 9 0v7c0 1.500-1 2-2 2H6c-1 0-2-.5-2-2z" fill="url(#bi340)"/></svg>
<div class="abs" style="left:134.1px;top:342.98px;font-size:11px;line-height:12.65px;color:#222;white-space:nowrap;transform:scaleX(0.9875);transform-origin:0 0;">Body7</div>
<svg class="abs" style="left:39px;top:366px" width="11" height="14" viewBox="0 0 11 14"><path d="M1.500 1.500l8 5.500-8 5.500z" fill="#fff" stroke="#333" stroke-width="1.300" stroke-linejoin="round"/></svg>
<div class="abs" style="left:58px;top:363px;width:115px;height:20px;background:rgba(241,241,241,.93)"></div>
<svg class="abs" style="left:61px;top:367px" width="16" height="13" viewBox="0 0 16 13"><path d="M.5 6.500c3-5.500 12-5.500 15 0c-3 5.500-12 5.500-15 0z" fill="#8c8c8c"/><circle cx="8" cy="6.500" r="3.300" fill="#f1f1f1"/><circle cx="8" cy="6.500" r="2" fill="#8c8c8c"/></svg>
<svg class="abs" style="left:86px;top:366px" width="17" height="14" viewBox="0 0 17 14"><path d="M.5 1h6l1 2H.5z" fill="#8a8a8a"/><path d="M.5 3.500h16v10H.5z" fill="#8f8f8f"/></svg>
<div class="abs" style="left:116.3px;top:366.98px;font-size:11px;line-height:12.65px;color:#222;white-space:nowrap;transform:scaleX(0.9835);transform-origin:0 0;">Sketches</div>
<div class="abs" style="left:4px;top:961px;width:300px;height:25px;background:#f1f1f1;border:1px solid #c6c6c6"></div>
<div class="abs" style="left:29.4px;top:966.97px;font-size:11px;line-height:12.65px;color:#4a4a4a;white-space:nowrap;transform:scaleX(0.8821);transform-origin:0 0;">COMMENTS</div>
<svg class="abs" style="left:282px;top:968px" width="10" height="10" viewBox="0 0 10 10"><circle cx="5" cy="5" r="4.600" fill="#222"/><path d="M2.500 5h5M5 2.500v5" stroke="#f1f1f1" stroke-width="1.300"/></svg>
<div class="abs" style="left:299px;top:968px;width:2px;height:10px;border-left:1px solid #777;border-right:1px solid #aaa"></div>
<div class="abs" style="left:0;top:990px;width:1920px;height:50px;background:#f1f1f1"></div>
<div class="abs" style="left:0;top:990px;width:1920px;height:2px;background:#cdcdcd"></div>
<svg class="abs" style="left:10px;top:1009px" width="14" height="14" viewBox="0 0 14 14"><path d="M1.500 0v14" stroke="#444" stroke-width="1.800"/><path d="M13.500 0v14L3 7z" fill="#444"/></svg>
<svg class="abs" style="left:35px;top:1010px" width="14" height="12" viewBox="0 0 14 12"><path d="M9 0v12L0 6z" fill="#444"/><rect x="10.500" y="3" width="2.200" height="6" fill="#444"/></svg>
<svg class="abs" style="left:60px;top:1008px" width="14" height="16" viewBox="0 0 14 16"><path d="M1 0l12 8-12 8z" fill="#444"/></svg>
<svg class="abs" style="left:85px;top:1010px" width="14" height="12" viewBox="0 0 14 12"><path d="M4 0v12l9-6z" fill="#444"/><rect x=".3" y="3" width="2.200" height="6" fill="#444"/></svg>
<svg class="abs" style="left:110px;top:1009px" width="14" height="14" viewBox="0 0 14 14"><path d="M12.500 0v14" stroke="#444" stroke-width="1.800"/><path d="M.5 0v14L11 7z" fill="#444"/></svg>
<svg class="abs" style="left:145.5px;top:1006px" width="18" height="18" viewBox="0 0 18 18"><rect x="2" y="2" width="13" height="13" fill="none" stroke="#444" stroke-width="1" stroke-dasharray="4 2"/><g fill="#1e88e5"><rect x=".5" y=".5" width="2.600" height="2.600"/><rect x="13.500" y=".5" width="2.600" height="2.600"/><rect x=".5" y="13.500" width="2.600" height="2.600"/></g><path d="M9 15.500l1-3 5.500-4.500 2 2.300-5.500 4.500z" fill="#f2b544"/><path d="M15.500 8l1-.8 2 2.300-1 .8z" fill="#e84a4a"/><path d="M9 15.500l1-3 2 2.300z" fill="#555"/></svg>
<svg class="abs" style="left:169.5px;top:1006px" width="18" height="18" viewBox="0 0 18 18"><rect x="2" y="2" width="13" height="13" fill="none" stroke="#444" stroke-width="1" stroke-dasharray="4 2"/><g fill="#1e88e5"><rect x=".5" y=".5" width="2.600" height="2.600"/><rect x="13.500" y=".5" width="2.600" height="2.600"/><rect x=".5" y="13.500" width="2.600" height="2.600"/></g><path d="M9 15.500l1-3 5.500-4.500 2 2.300-5.500 4.500z" fill="#f2b544"/><path d="M15.500 8l1-.8 2 2.300-1 .8z" fill="#e84a4a"/><path d="M9 15.500l1-3 2 2.300z" fill="#555"/></svg>
<svg class="abs" style="left:193.5px;top:1006px" width="19" height="18" viewBox="0 0 19 18"><path d="M1 14.500l3-2.500h10l-3 2.500v2H1z" fill="#c4c4c4"/><path d="M1 4l3-3h10l-3 3z" fill="#8cc8f5"/><path d="M1 4h10v10.500H1z" fill="#5aa9e6"/><path d="M11 4l3-3v10.500l-3 3z" fill="#3d8fd1"/><path d="M16.500 3v11.500" stroke="#222" stroke-width="1.100"/><path d="M14.800 5l1.700-3.800L18.200 5z" fill="#222"/></svg>
<svg class="abs" style="left:217.5px;top:1006px" width="19" height="18" viewBox="0 0 19 18"><path d="M1 14.500l3-2.500h10l-3 2.500v2H1z" fill="#c4c4c4"/><path d="M1 4l3-3h10l-3 3z" fill="#8cc8f5"/><path d="M1 4h10v10.500H1z" fill="#5aa9e6"/><path d="M11 4l3-3v10.500l-3 3z" fill="#3d8fd1"/><path d="M16.500 3v11.500" stroke="#222" stroke-width="1.100"/><path d="M14.800 5l1.700-3.800L18.200 5z" fill="#222"/></svg>
<svg class="abs" style="left:241.5px;top:1006px" width="19" height="18" viewBox="0 0 19 18"><path d="M1 14.500l3-2.500h10l-3 2.500v2H1z" fill="#c4c4c4"/><path d="M1 4l3-3h10l-3 3z" fill="#8cc8f5"/><path d="M1 4h10v10.500H1z" fill="#5aa9e6"/><path d="M11 4l3-3v10.500l-3 3z" fill="#3d8fd1"/><path d="M16.500 3v11.500" stroke="#222" stroke-width="1.100"/><path d="M14.800 5l1.700-3.800L18.200 5z" fill="#222"/></svg>
<svg class="abs" style="left:265.5px;top:1006px" width="18" height="18" viewBox="0 0 18 18"><rect x="2" y="2" width="13" height="13" fill="none" stroke="#444" stroke-width="1" stroke-dasharray="4 2"/><g fill="#1e88e5"><rect x=".5" y=".5" width="2.600" height="2.600"/><rect x="13.500" y=".5" width="2.600" height="2.600"/><rect x=".5" y="13.500" width="2.600" height="2.600"/></g><path d="M9 15.500l1-3 5.500-4.500 2 2.300-5.500 4.500z" fill="#f2b544"/><path d="M15.500 8l1-.8 2 2.300-1 .8z" fill="#e84a4a"/><path d="M9 15.500l1-3 2 2.300z" fill="#555"/></svg>
<svg class="abs" style="left:289.5px;top:1006px" width="19" height="18" viewBox="0 0 19 18"><path d="M1 14.500l3-2.500h10l-3 2.500v2H1z" fill="#c4c4c4"/><path d="M1 4l3-3h10l-3 3z" fill="#8cc8f5"/><path d="M1 4h10v10.500H1z" fill="#5aa9e6"/><path d="M11 4l3-3v10.500l-3 3z" fill="#3d8fd1"/><path d="M16.500 3v11.500" stroke="#222" stroke-width="1.100"/><path d="M14.800 5l1.700-3.800L18.200 5z" fill="#222"/></svg>
<svg class="abs" style="left:313.5px;top:1006px" width="18" height="18" viewBox="0 0 18 18"><rect x="2" y="2" width="13" height="13" fill="none" stroke="#444" stroke-width="1" stroke-dasharray="4 2"/><g fill="#1e88e5"><rect x=".5" y=".5" width="2.600" height="2.600"/><rect x="13.500" y=".5" width="2.600" height="2.600"/><rect x=".5" y="13.500" width="2.600" height="2.600"/></g><path d="M9 15.500l1-3 5.500-4.500 2 2.300-5.500 4.500z" fill="#f2b544"/><path d="M15.500 8l1-.8 2 2.300-1 .8z" fill="#e84a4a"/><path d="M9 15.500l1-3 2 2.300z" fill="#555"/></svg>
<svg class="abs" style="left:337.5px;top:1006px" width="19" height="18" viewBox="0 0 19 18"><path d="M1 14.500l3-2.500h10l-3 2.500v2H1z" fill="#c4c4c4"/><path d="M1 4l3-3h10l-3 3z" fill="#8cc8f5"/><path d="M1 4h10v10.500H1z" fill="#5aa9e6"/><path d="M11 4l3-3v10.500l-3 3z" fill="#3d8fd1"/><path d="M16.500 3v11.500" stroke="#222" stroke-width="1.100"/><path d="M14.800 5l1.700-3.800L18.200 5z" fill="#222"/></svg>
<svg class="abs" style="left:361.5px;top:1006px" width="18" height="18" viewBox="0 0 18 18"><rect x="2" y="2" width="13" height="13" fill="none" stroke="#444" stroke-width="1" stroke-dasharray="4 2"/><g fill="#1e88e5"><rect x=".5" y=".5" width="2.600" height="2.600"/><rect x="13.500" y=".5" width="2.600" height="2.600"/><rect x=".5" y="13.500" width="2.600" height="2.600"/></g><path d="M9 15.500l1-3 5.500-4.500 2 2.300-5.500 4.500z" fill="#f2b544"/><path d="M15.500 8l1-.8 2 2.300-1 .8z" fill="#e84a4a"/><path d="M9 15.500l1-3 2 2.300z" fill="#555"/></svg>
<svg class="abs" style="left:385.5px;top:1006px" width="19" height="18" viewBox="0 0 19 18"><path d="M1 14.500l3-2.500h10l-3 2.500v2H1z" fill="#c4c4c4"/><path d="M1 4l3-3h10l-3 3z" fill="#8cc8f5"/><path d="M1 4h10v10.500H1z" fill="#5aa9e6"/><path d="M11 4l3-3v10.500l-3 3z" fill="#3d8fd1"/><path d="M16.500 3v11.500" stroke="#222" stroke-width="1.100"/><path d="M14.800 5l1.700-3.800L18.200 5z" fill="#222"/></svg>
<svg class="abs" style="left:409.5px;top:1006px" width="18" height="18" viewBox="0 0 18 18"><rect x="2" y="2" width="13" height="13" fill="none" stroke="#444" stroke-width="1" stroke-dasharray="4 2"/><g fill="#1e88e5"><rect x=".5" y=".5" width="2.600" height="2.600"/><rect x="13.500" y=".5" width="2.600" height="2.600"/><rect x=".5" y="13.500" width="2.600" height="2.600"/></g><path d="M9 15.500l1-3 5.500-4.500 2 2.300-5.500 4.500z" fill="#f2b544"/><path d="M15.500 8l1-.8 2 2.300-1 .8z" fill="#e84a4a"/><path d="M9 15.500l1-3 2 2.300z" fill="#555"/></svg>
<svg class="abs" style="left:433.5px;top:1006px" width="18" height="18" viewBox="0 0 18 18"><path d="M8.500 1.500v15M1 9h15" stroke="#333" stroke-width="1.300"/><path d="M8.500 0l2.800 3.600H5.700zM8.500 18l2.800-3.600H5.700zM0 9l3.600-2.800v5.600zM17 9l-3.600-2.800v5.600z" fill="#333"/></svg>
<svg class="abs" style="left:457.5px;top:1006px" width="18" height="18" viewBox="0 0 18 18"><path d="M8.500 1.500v15M1 9h15" stroke="#333" stroke-width="1.300"/><path d="M8.500 0l2.800 3.600H5.700zM8.500 18l2.800-3.600H5.700zM0 9l3.600-2.800v5.600zM17 9l-3.600-2.800v5.600z" fill="#333"/></svg>
<svg class="abs" style="left:481.5px;top:1006px" width="18" height="18" viewBox="0 0 18 18"><rect x="2" y="2" width="13" height="13" fill="none" stroke="#444" stroke-width="1" stroke-dasharray="4 2"/><g fill="#1e88e5"><rect x=".5" y=".5" width="2.600" height="2.600"/><rect x="13.500" y=".5" width="2.600" height="2.600"/><rect x=".5" y="13.500" width="2.600" height="2.600"/></g><path d="M9 15.500l1-3 5.500-4.500 2 2.300-5.500 4.500z" fill="#f2b544"/><path d="M15.500 8l1-.8 2 2.300-1 .8z" fill="#e84a4a"/><path d="M9 15.500l1-3 2 2.300z" fill="#555"/></svg>
<svg class="abs" style="left:505.5px;top:1006px" width="19" height="18" viewBox="0 0 19 18"><path d="M1 14.500l3-2.500h10l-3 2.500v2H1z" fill="#c4c4c4"/><path d="M1 4l3-3h10l-3 3z" fill="#8cc8f5"/><path d="M1 4h10v10.500H1z" fill="#5aa9e6"/><path d="M11 4l3-3v10.500l-3 3z" fill="#3d8fd1"/><path d="M16.500 3v11.500" stroke="#222" stroke-width="1.100"/><path d="M14.800 5l1.700-3.800L18.200 5z" fill="#222"/></svg>
<svg class="abs" style="left:529.5px;top:1006px" width="18" height="18" viewBox="0 0 18 18"><rect x="2" y="2" width="13" height="13" fill="none" stroke="#444" stroke-width="1" stroke-dasharray="4 2"/><g fill="#1e88e5"><rect x=".5" y=".5" width="2.600" height="2.600"/><rect x="13.500" y=".5" width="2.600" height="2.600"/><rect x=".5" y="13.500" width="2.600" height="2.600"/></g><path d="M9 15.500l1-3 5.500-4.500 2 2.300-5.500 4.500z" fill="#f2b544"/><path d="M15.500 8l1-.8 2 2.300-1 .8z" fill="#e84a4a"/><path d="M9 15.500l1-3 2 2.300z" fill="#555"/></svg>
<svg class="abs" style="left:553.5px;top:1006px" width="18" height="18" viewBox="0 0 18 18"><rect x="2" y="2" width="13" height="13" fill="none" stroke="#444" stroke-width="1" stroke-dasharray="4 2"/><g fill="#1e88e5"><rect x=".5" y=".5" width="2.600" height="2.600"/><rect x="13.500" y=".5" width="2.600" height="2.600"/><rect x=".5" y="13.500" width="2.600" height="2.600"/></g><path d="M9 15.500l1-3 5.500-4.500 2 2.300-5.500 4.500z" fill="#f2b544"/><path d="M15.500 8l1-.8 2 2.300-1 .8z" fill="#e84a4a"/><path d="M9 15.500l1-3 2 2.300z" fill="#555"/></svg>
<svg class="abs" style="left:577.5px;top:1008px" width="18" height="14" viewBox="0 0 18 14"><path d="M2 8.500l10-5c3-1.200 4.600 3 2 4.500L5 13z" fill="#8cc8f5" stroke="#3d8fd1" stroke-width=".8"/><ellipse cx="4" cy="10.500" rx="2.800" ry="3" fill="#5aa9e6" stroke="#3d8fd1" stroke-width=".8"/></svg>
<svg class="abs" style="left:601.5px;top:1006px" width="19" height="18" viewBox="0 0 19 18"><path d="M1.500 5.500l3.500-4h4c5 0 8.500 3.500 8.500 8.500v3.500l-3.500 3.500h-12.500z" fill="#dedede" stroke="#555" stroke-width="1"/><path d="M7 2.500l2-1c5 0 8.500 3.500 8.500 8.500v1l-3.300 3c0-6-2.500-9.500-7.200-11.500z" fill="#5aa9e6"/></svg>
<svg class="abs" style="left:625.5px;top:1006px" width="19" height="18" viewBox="0 0 19 18"><path d="M1.500 5.500l3.500-4h4c5 0 8.500 3.500 8.500 8.500v3.500l-3.500 3.500h-12.500z" fill="#dedede" stroke="#555" stroke-width="1"/><path d="M7 2.500l2-1c5 0 8.500 3.500 8.500 8.500v1l-3.300 3c0-6-2.500-9.500-7.200-11.500z" fill="#5aa9e6"/></svg>
<svg class="abs" style="left:649.5px;top:1006px" width="19" height="18" viewBox="0 0 19 18"><path d="M1.500 5.500l3.500-4h4c5 0 8.500 3.500 8.500 8.500v3.500l-3.500 3.500h-12.500z" fill="#dedede" stroke="#555" stroke-width="1"/><path d="M7 2.500l2-1c5 0 8.500 3.500 8.500 8.500v1l-3.300 3c0-6-2.500-9.500-7.200-11.500z" fill="#5aa9e6"/></svg>
<svg class="abs" style="left:673.5px;top:1006px" width="18" height="18" viewBox="0 0 18 18"><rect x="2" y="2" width="13" height="13" fill="none" stroke="#444" stroke-width="1" stroke-dasharray="4 2"/><g fill="#1e88e5"><rect x=".5" y=".5" width="2.600" height="2.600"/><rect x="13.500" y=".5" width="2.600" height="2.600"/><rect x=".5" y="13.500" width="2.600" height="2.600"/></g><path d="M9 15.500l1-3 5.500-4.500 2 2.300-5.500 4.500z" fill="#f2b544"/><path d="M15.500 8l1-.8 2 2.300-1 .8z" fill="#e84a4a"/><path d="M9 15.500l1-3 2 2.300z" fill="#555"/></svg>
<svg class="abs" style="left:697.5px;top:1006px" width="19" height="18" viewBox="0 0 19 18"><path d="M1 14.500l3-2.500h10l-3 2.500v2H1z" fill="#c4c4c4"/><path d="M1 4l3-3h10l-3 3z" fill="#8cc8f5"/><path d="M1 4h10v10.500H1z" fill="#5aa9e6"/><path d="M11 4l3-3v10.500l-3 3z" fill="#3d8fd1"/><path d="M16.500 3v11.500" stroke="#222" stroke-width="1.100"/><path d="M14.800 5l1.700-3.800L18.200 5z" fill="#222"/></svg>
<svg class="abs" style="left:0;top:1000px" width="760" height="40" viewBox="0 1000 760 40"><path d="M154 1031.500H706M154 1026V1031.500M178 1026V1031.500M202 1026V1031.500M226 1026V1031.500M250 1026V1031.500M274 1026V1031.500M298 1026V1031.500M322 1026V1031.500M346 1026V1031.500M370 1026V1031.500M394 1026V1031.500M418 1026V1031.500M442 1026V1031.500M466 1026V1031.500M490 1026V1031.500M514 1026V1031.500M538 1026V1031.500M562 1026V1031.500M586 1026V1031.500M610 1026V1031.500M634 1026V1031.500M658 1026V1031.500M682 1026V1031.500M706 1026V1031.500" stroke="#c4c4c4" stroke-width="1.600" fill="none"/><path d="M712 1001.500h12.500l-5.200 8v23.500h-2v-23.500z" fill="#444"/></svg>
<svg class="abs" style="left:1890px;top:1007px" width="18" height="18" viewBox="0 0 18 18"><g fill="#8a8a8a"><circle cx="9" cy="9" r="5.800"/><rect x="7.300" y=".8" width="3.400" height="16.400" transform="rotate(0 9 9)"/><rect x="7.300" y=".8" width="3.400" height="16.400" transform="rotate(45 9 9)"/><rect x="7.300" y=".8" width="3.400" height="16.400" transform="rotate(90 9 9)"/><rect x="7.300" y=".8" width="3.400" height="16.400" transform="rotate(135 9 9)"/></g><circle cx="9" cy="9" r="2.400" fill="#f1f1f1"/></svg>
<div class="abs" style="left:0;top:1040px;width:1920px;height:40px;background:linear-gradient(90deg,#cfe6f0 0%,#d3e6ef 30%,#d6e2ec 55%,#d7dde9 80%,#d6d9e6 100%)"></div>
<svg class="abs" style="left:16px;top:1052px" width="17" height="17" viewBox="0 0 17 17"><path d="M0 2.400L7 1.400V8H0zM8 1.250L17 0V8H8zM0 9H7V15.600L0 14.600zM8 9H17V17L8 15.750z" fill="#111"/></svg>
<div class="abs" style="left:48px;top:1040px;width:344px;height:40px;background:#fff;border:1px solid #c4c8cc"></div>
<svg class="abs" style="left:60px;top:1051px" width="18" height="18" viewBox="0 0 18 18"><circle cx="11" cy="7" r="5.300" fill="none" stroke="#222" stroke-width="1.300"/><path d="M7.200 10.800L1 17" stroke="#222" stroke-width="1.500"/></svg>
<div class="abs" style="left:88.3px;top:1051.90px;font-size:14.6px;line-height:16.79px;color:#2a2a2a;white-space:nowrap;transform:scaleX(0.9953);transform-origin:0 0;">Введите здесь текст для поиска</div>
<svg class="abs" style="left:406px;top:1050px" width="20" height="20" viewBox="0 0 20 20"><circle cx="10" cy="10" r="6.800" fill="none" stroke="#111" stroke-width="2.300"/></svg>
<svg class="abs" style="left:454px;top:1051px" width="20" height="18" viewBox="0 0 20 18"><rect x="3.500" y="4.500" width="9" height="9" fill="none" stroke="#111" stroke-width="1.300"/><path d="M2 2h12M2 16h12" stroke="#111" stroke-width="1.300"/><path d="M16.500 3v3M16.500 8.500v7" stroke="#111" stroke-width="1.500"/></svg>
<svg class="abs" style="left:502px;top:1047px" width="26" height="26" viewBox="0 0 26 26"><defs><linearGradient id="ed1" x1="0" y1="0" x2="1" y2="1"><stop offset="0" stop-color="#35c1f1"/><stop offset="1" stop-color="#0c59a4"/></linearGradient><linearGradient id="ed2" x1="0" y1="0" x2="1" y2="0"><stop offset="0" stop-color="#2bc2d5"/><stop offset="1" stop-color="#6bd45c"/></linearGradient></defs><circle cx="13" cy="13" r="12" fill="url(#ed1)"/><path d="M3 7C7 0 19-1 24 7c1.500 3 1 6-2 7h-8c0-3-3-5-6-3-2 1-3 3-3 5-2-3-2-6-2-9z" fill="url(#ed2)"/><path d="M11 11c3-1 6 1 5 4-1 2-3 2-4 2 1 2 5 3 9 1-2 5-9 7-13 3-3-4-1-9 3-10z" fill="#fff" opacity=".92"/><path d="M10 12.500c2.500-1 4.500.5 4 2.500-1 2-3 1.500-4 1 .3 2.500 4 4 7.500 2.500-2 3.500-7 4.500-9.500 1.500-2-3-1-6.500 2-7.500z" fill="#1567b5"/></svg>
<svg class="abs" style="left:551px;top:1049px" width="25" height="22" viewBox="0 0 25 22"><path d="M1 2h8l2 2h12v4H1z" fill="#e8a824"/><path d="M1 5.500h23v15.500H1z" fill="#fbd35c"/><path d="M1 9h23v12H1z" fill="#f9c93c"/><path d="M6 14h13v7h-4v-3.500h-5v3.500H6z" fill="#3b8fd8"/></svg>
<svg class="abs" style="left:599px;top:1048px" width="26" height="24" viewBox="0 0 26 24"><path d="M1 9.500l12-8.500 12 8.500v13H1z" fill="#1173c4"/><path d="M1 9.500l12 8 12-8v13H1z" fill="#28a8ea"/><path d="M4 10l9 6 9-6V8H4z" fill="#fff"/><path d="M1 22.500l10-8M25 22.500l-10-8" stroke="#1789d4" stroke-width="1"/></svg>
<svg class="abs" style="left:648px;top:1049px" width="26" height="23" viewBox="0 0 26 23"><path d="M1.500 1h16l7 10.500-7 10.500h-16z" fill="#f4f4f4" stroke="#c9c9c9" stroke-width="1"/><text x="4.500" y="18.500" font-family="Liberation Sans" font-weight="bold" font-size="18" fill="#e21a1a">Я</text></svg>
<svg class="abs" style="left:698px;top:1048px" width="24" height="24" viewBox="0 0 24 24"><circle cx="12" cy="12" r="11.500" fill="#fff"/><path d="M12 .5a11.500 11.500 0 0 1 10 5.750H12a5.750 5.750 0 0 0-5 2.900L2 6A11.500 11.500 0 0 1 12 .5z" fill="#e33b2e"/><path d="M22 6.250a11.500 11.500 0 0 1-10.500 17.250L16.800 15a5.750 5.750 0 0 0 0-5.800L22 6.250z" fill="#fbc116" transform="rotate(0 12 12)"/><path d="M11.500 23.500A11.500 11.500 0 0 1 2 6l5 8.800a5.750 5.750 0 0 0 7 2.600z" fill="#2da94f"/><circle cx="12" cy="12" r="5.300" fill="#fff"/><circle cx="12" cy="12" r="4.200" fill="#4a8af4"/></svg>
<svg class="abs" style="left:747px;top:1048px" width="26" height="25" viewBox="0 0 26 25"><path d="M5 0h21v19l-6 6H0V5z" fill="#15a6e6"/><path d="M21 6.500h-7.500a6 6 0 0 0 0 12H21v-3.600h-7.500a2.400 2.400 0 0 1 0-4.800H21z" fill="#fff"/></svg>
<div class="abs" style="left:785px;top:1040px;width:48px;height:40px;background:rgba(255,255,255,.55)"></div>
<svg class="abs" style="left:797px;top:1048px" width="24" height="24" viewBox="0 0 24 24"><rect width="24" height="24" fill="#f9dcc0"/><path d="M6 3h12v4h-7.500v4H17v4h-6.500v6H6z" fill="#f08c1e"/><path d="M6 3h4.500v18H6z" fill="#c65a0e"/><path d="M10.500 11H17v4h-6.500z" fill="#f6a64a"/><rect x="13" y="18" width="8" height="3.500" fill="#f3b27a" opacity=".8"/></svg>
<svg class="abs" style="left:846px;top:1048px" width="24" height="24" viewBox="0 0 24 24"><circle cx="12" cy="12" r="11.500" fill="#1a9aa0"/><path d="M8 8.500a3.500 3.500 0 1 0 0 7c3 0 5-7 8-7a3.500 3.500 0 1 1 0 7c-3 0-5-7-8-7z" fill="none" stroke="#fff" stroke-width="1.800"/></svg>
<svg class="abs" style="left:897px;top:1048px" width="20" height="25" viewBox="0 0 20 25"><rect x=".5" y=".5" width="19" height="24" rx="1.500" fill="#6b6f78"/><rect x="2.500" y="2.500" width="15" height="5" fill="#4fd0f5"/><g fill="#d9dbe0"><rect x="2.500" y="9.500" width="4" height="4"/><rect x="8" y="9.500" width="4" height="4"/><rect x="13.500" y="9.500" width="4" height="4"/><rect x="2.500" y="14.500" width="4" height="4"/><rect x="8" y="14.500" width="4" height="4"/><rect x="2.500" y="19.500" width="4" height="4"/><rect x="8" y="19.500" width="4" height="4"/></g><rect x="13.500" y="14.500" width="4" height="9" fill="#1f4fa0"/></svg>
<svg class="abs" style="left:944px;top:1047px" width="24" height="26" viewBox="0 0 24 26"><path d="M12 .5l11 6v13l-11 6-11-6v-13z" fill="#10a37c"/><rect x="7" y="7" width="11" height="8" fill="#3a6ea8"/><rect x="8" y="8" width="9" height="6" fill="#7fb2e6"/><rect x="7" y="13" width="5" height="6" fill="#e24a4a"/><rect x="13" y="17" width="5" height="2" fill="#2a4a3a"/></svg>
<svg class="abs" style="left:993px;top:1048px" width="24" height="24" viewBox="0 0 24 24"><rect width="24" height="24" rx="6.500" fill="#4a8cff"/><rect x="4.500" y="8" width="10.500" height="8" rx="1.800" fill="#fff"/><path d="M15.800 11l4-2.600v7.200l-4-2.600z" fill="#fff"/></svg>
<svg class="abs" style="left:1040px;top:1046px" width="28" height="28" viewBox="0 0 28 28"><path d="M12 8c-6 0-10 4-10 9 0 4 3 6 6 6 2 0 2-2 4-2s3 2 6 1c4-1 6-5 5-9-1-3-5-5-11-5z" fill="#dfe8f2" stroke="#8fa3bb" stroke-width="1"/><circle cx="7" cy="14" r="1.800" fill="#e8483f"/><circle cx="11" cy="11.500" r="1.800" fill="#5ab552"/><circle cx="16" cy="11.500" r="1.800" fill="#f0b630"/><circle cx="13" cy="18" r="1.800" fill="#fff" stroke="#9ab"/><path d="M13.500 24L22 7l2 1-8.500 17z" fill="#d9822b"/><path d="M21.500 8l1.500-5c1.500-1 3 0 3 1.500L24.500 9z" fill="#c9a06a"/></svg>
<div class="abs" style="left:691px;top:1078px;width:40px;height:2px;background:#0a6ad0"></div>
<div class="abs" style="left:740px;top:1078px;width:40px;height:2px;background:#0a6ad0"></div>
<div class="abs" style="left:785px;top:1078px;width:48px;height:2px;background:#0a6ad0"></div>
<div class="abs" style="left:1034px;top:1078px;width:40px;height:2px;background:#0a6ad0"></div>
<svg class="abs" style="left:1650px;top:1054px" width="14" height="10" viewBox="0 0 14 10"><path d="M1 8l6-6 6 6" stroke="#111" stroke-width="1.300" fill="none"/></svg>
<svg class="abs" style="left:1674px;top:1050px" width="17" height="20" viewBox="0 0 17 20"><rect x="3" y="1" width="6.500" height="5" fill="none" stroke="#111" stroke-width="1"/><rect x="4.500" y="2.500" width="1.200" height="1.500" fill="#111"/><rect x="6.800" y="2.500" width="1.200" height="1.500" fill="#111"/><path d="M2 6h8.500v11.500H2z" fill="none" stroke="#111" stroke-width="1.100"/><path d="M10 14l2 3 3.500-5" stroke="#111" stroke-width="1" fill="none"/></svg>
<svg class="abs" style="left:1698px;top:1051px" width="14" height="18" viewBox="0 0 14 18"><path d="M7 .5l6.500 3v6c0 4-3 6.500-6.500 8-3.500-1.500-6.500-4-6.500-8v-6z" fill="#13a37f"/><path d="M4 9l2.300 2.300L10.500 7" stroke="#fff" stroke-width="1.400" fill="none"/></svg>
<svg class="abs" style="left:1722px;top:1052px" width="18" height="16" viewBox="0 0 18 16"><path d="M2 14C2 8 7 3 14 3" stroke="#888" stroke-width="1" fill="none"/><path d="M5 14c0-4.500 4-8 9-8" stroke="#555" stroke-width="1.100" fill="none"/><path d="M8 14c0-3 3-5 6-5" stroke="#111" stroke-width="1.200" fill="none"/><circle cx="11.500" cy="13" r="1.600" fill="#111"/></svg>
<svg class="abs" style="left:1743px;top:1051px" width="20" height="18" viewBox="0 0 20 18"><path d="M2 6.500h3l4-4v13l-4-4H2z" fill="none" stroke="#111" stroke-width="1.100" stroke-linejoin="round"/><path d="M11.500 6.500c1.200 1.200 1.200 3.800 0 5" stroke="#111" stroke-width="1" fill="none"/><path d="M13.800 4.500c2.300 2.300 2.300 6.700 0 9" stroke="#777" stroke-width="1" fill="none"/><path d="M16 2.500c3.300 3.300 3.300 9.700 0 13" stroke="#aaa" stroke-width="1" fill="none"/></svg>
<div class="abs" style="left:1771.6px;top:1053.10px;font-size:12px;line-height:13.8px;color:#111;white-space:nowrap;transform:scaleX(0.8383);transform-origin:0 0;">ENG</div>
<div class="abs" style="left:1820.8px;top:1044.10px;font-size:12px;line-height:13.8px;color:#111;white-space:nowrap;transform:scaleX(0.8592);transform-origin:0 0;">17:46</div>
<div class="abs" style="left:1808.3px;top:1062.10px;font-size:12px;line-height:13.8px;color:#111;white-space:nowrap;transform:scaleX(0.8709);transform-origin:0 0;">10.03.2022</div>
<svg class="abs" style="left:1878px;top:1051px" width="18" height="18" viewBox="0 0 18 18"><path d="M1.500 1.500h15v11.500h-5l-2.500 3-2.500-3h-5z" fill="none" stroke="#111" stroke-width="1.200" stroke-linejoin="miter"/></svg>
<div class="abs" style="left:1915px;top:1044px;width:1px;height:36px;background:#9aa0aa"></div>
</div>
</body></html>
